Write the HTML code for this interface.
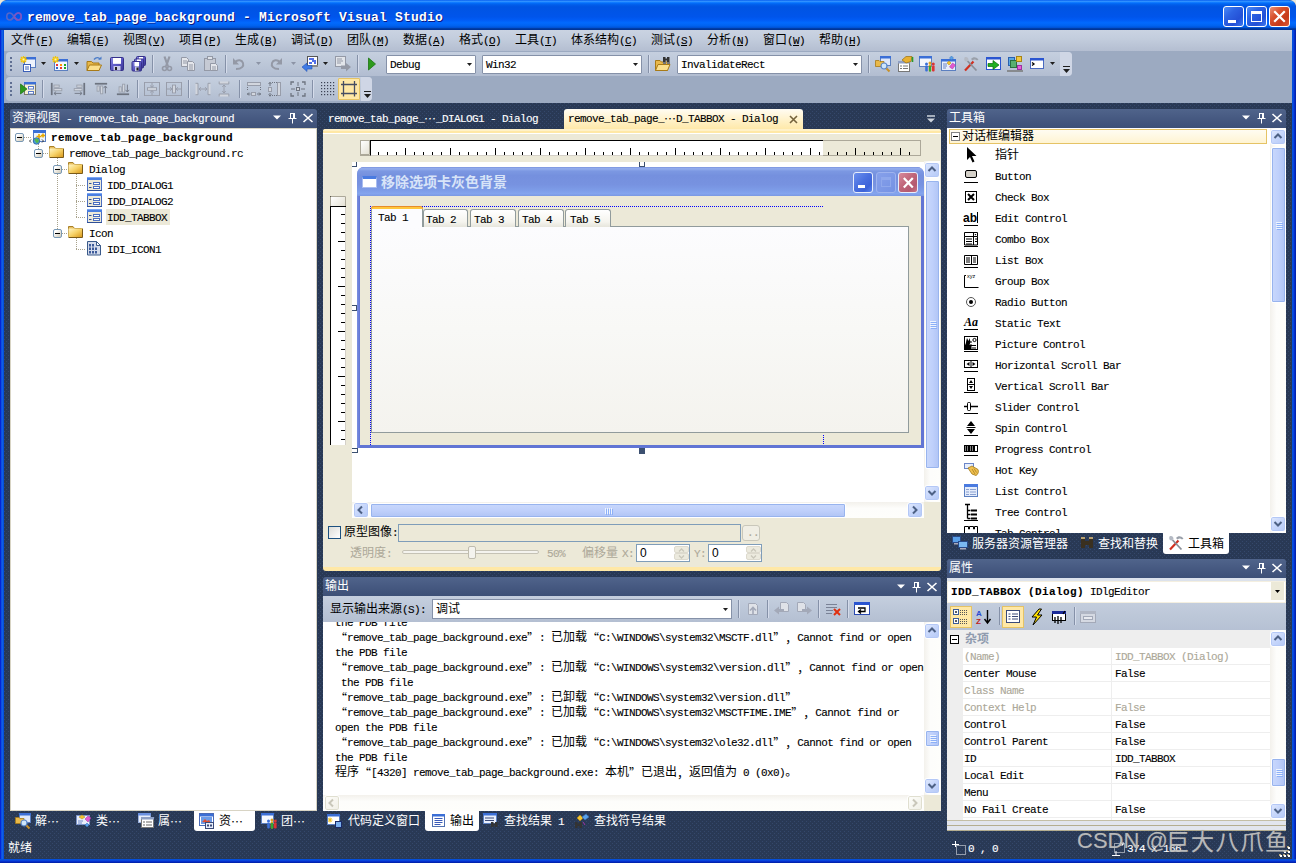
<!DOCTYPE html>
<html lang="zh"><head><meta charset="utf-8"><title>remove_tab_page_background - Microsoft Visual Studio</title>
<style>
html,body{margin:0;padding:0;background:#293955;overflow:hidden}
#root{text-spacing-trim:space-all;position:relative;width:1296px;height:863px;overflow:hidden;background:#293955;font:12px/14px "Liberation Mono","Noto Sans CJK SC",monospace;color:#000}
#root div{position:absolute;box-sizing:border-box}
#root svg{position:absolute;overflow:visible}
.t{white-space:pre;font-size:12px}
.l{font-family:"Liberation Mono",monospace;font-size:11px;letter-spacing:-0.6px;-webkit-text-stroke:0.12px currentColor}
.lb{font-family:"Liberation Mono",monospace;font-size:11px;font-weight:bold;letter-spacing:0.4px;-webkit-text-stroke:0.1px currentColor}
.lt{font-family:"Liberation Mono",monospace;font-size:13px;font-weight:bold;letter-spacing:0.2px}
.w{color:#fff}
.dots{background-color:#293955;background-image:radial-gradient(circle at 0.500px 0.500px,#35486b 0.550px,transparent 0.650px),radial-gradient(circle at 0.500px 0.500px,#35486b 0.550px,transparent 0.650px);background-size:4px 4px;background-position:0 0,2px 2px}
.q{display:inline-block;width:12px;vertical-align:-2px;font-family:"Noto Sans CJK SC","Liberation Mono",sans-serif;font-size:12px;letter-spacing:0;line-height:0;text-spacing-trim:space-all}
.twt{background:linear-gradient(to bottom,#50648b 0,#465981 50%,#3d5077 100%);border-radius:3px 3px 0 0;color:#fff}
.sbtn{background:linear-gradient(to right,#e3ebfd 0,#c8d7fb 50%,#bbcdf8 100%);border:1px solid #fff;border-radius:2px;box-shadow:0 0 0 1px #b4c8f6 inset}
.qe{position:relative;top:0}

</style></head>
<body>
<div id="root">
<!-- frame -->
<div class="dots" style="left:4px;top:103px;width:1288px;height:756px;"></div><div style="left:0px;top:0px;width:4px;height:863px;background:linear-gradient(to right,#0019cf 0,#0831d9 1px,#166aee 2px,#0855dd 3px,#0048d8 4px)"></div><div style="left:1292px;top:0px;width:4px;height:863px;background:linear-gradient(to right,#0048d8 0,#0855dd 1px,#0734da 2px,#001ea0 4px)"></div><div style="left:0px;top:859px;width:1296px;height:4px;background:linear-gradient(to bottom,#0048d8 0,#0855dd 1px,#0734da 2px,#001ea0 4px)"></div><div style="left:0px;top:0px;width:1296px;height:30px;border-radius:7px 7px 0 0;background:linear-gradient(to bottom,#0058ee 0%,#3593ff 4%,#288eff 6%,#127dff 8%,#036ffc 10%,#0262ee 14%,#0057e5 20%,#0054e3 24%,#0055eb 56%,#005bf5 66%,#026afe 76%,#0062ef 86%,#0052d6 92%,#0040ab 94%,#003092 100%)"></div><svg style="left:0;top:0" width="1296" height="8"><path d="M0 0H6Q1 1 0 6Z" fill="#ece9d8"/><path d="M1296 0H1290Q1295 1 1296 6Z" fill="#ece9d8"/></svg><svg style="left:6px;top:12px" width="16" height="9" viewBox="0 0 16 9"><path d="M8 4.500C6.500 2 5 1 3.800 1A3 3.500 0 0 0 3.800 8C5 8 6.500 7 8 4.500C9.500 2 11 1 12.200 1A3 3.500 0 0 1 12.200 8C11 8 9.500 7 8 4.500Z" fill="none" stroke="#5566c8" stroke-width="1.600"/><path d="M8 4.500C9.500 2 11 1 12.200 1A3 3.500 0 0 1 12.200 8C11 8 9.500 7 8 4.500" fill="none" stroke="#7d54c4" stroke-width="1.600"/></svg><div class="t" style="left:27px;top:10px;line-height:16px;color:#fff;text-shadow:1px 1px 0 #0a1883"><span class="lt">remove_tab_page_background - Microsoft Visual Studio</span></div><div style="left:1223px;top:6px;width:21px;height:21px;border:1px solid #fff;border-radius:3px;background:radial-gradient(circle at 70% 75%,#2f6ff2 0,#2a5fe0 45%,#4a84f5 100%);background:linear-gradient(135deg,#4b8bf7 0%,#2d63e3 35%,#2450d6 70%,#3a78f0 100%)"><div style="left:4px;top:13px;width:8px;height:3px;background:#fff"></div></div><div style="left:1246px;top:6px;width:21px;height:21px;border:1px solid #fff;border-radius:3px;background:linear-gradient(135deg,#4b8bf7 0%,#2d63e3 35%,#2450d6 70%,#3a78f0 100%)"><div style="left:4px;top:4px;width:11px;height:11px;border:1px solid #fff;border-top:3px solid #fff"></div></div><div style="left:1269px;top:6px;width:21px;height:21px;border:1px solid #fff;border-radius:3px;background:linear-gradient(135deg,#eb9076 0%,#d8512d 35%,#c6391a 70%,#dd5a36 100%)"><svg style="left:3px;top:3px" width="13" height="13" viewBox="0 0 13 13"><path d="M2 2L11 11M11 2L2 11" stroke="#fff" stroke-width="2.2" stroke-linecap="square"/></svg></div>
<!-- menubar -->
<div style="left:4px;top:30px;width:1288px;height:21px;background:linear-gradient(to bottom,#cad3e2 0,#c3cddd 40%,#b4bed1 100%)"></div><div class="t" style="left:11px;top:34px;line-height:14px">文件<span class="l">(<u>F</u>)</span></div><div class="t" style="left:67px;top:34px;line-height:14px">编辑<span class="l">(<u>E</u>)</span></div><div class="t" style="left:123px;top:34px;line-height:14px">视图<span class="l">(<u>V</u>)</span></div><div class="t" style="left:179px;top:34px;line-height:14px">项目<span class="l">(<u>P</u>)</span></div><div class="t" style="left:235px;top:34px;line-height:14px">生成<span class="l">(<u>B</u>)</span></div><div class="t" style="left:291px;top:34px;line-height:14px">调试<span class="l">(<u>D</u>)</span></div><div class="t" style="left:347px;top:34px;line-height:14px">团队<span class="l">(<u>M</u>)</span></div><div class="t" style="left:403px;top:34px;line-height:14px">数据<span class="l">(<u>A</u>)</span></div><div class="t" style="left:459px;top:34px;line-height:14px">格式<span class="l">(<u>O</u>)</span></div><div class="t" style="left:515px;top:34px;line-height:14px">工具<span class="l">(<u>T</u>)</span></div><div class="t" style="left:571px;top:34px;line-height:14px">体系结构<span class="l">(<u>C</u>)</span></div><div class="t" style="left:651px;top:34px;line-height:14px">测试<span class="l">(<u>S</u>)</span></div><div class="t" style="left:707px;top:34px;line-height:14px">分析<span class="l">(<u>N</u>)</span></div><div class="t" style="left:763px;top:34px;line-height:14px">窗口<span class="l">(<u>W</u>)</span></div><div class="t" style="left:819px;top:34px;line-height:14px">帮助<span class="l">(<u>H</u>)</span></div>
<!-- toolbars -->
<div style="left:4px;top:51px;width:1288px;height:52px;background:#9caac1"></div><div style="left:6px;top:52px;width:1066px;height:24px;background:linear-gradient(to bottom,#c5cfdf 0,#bcc7d8 50%,#b2bdd1 100%);border-radius:4px;"></div><div style="left:1060px;top:52px;width:12px;height:24px;background:#cfd6e5;border-radius:0 4px 4px 0"></div><div style="left:6px;top:77px;width:366px;height:24px;background:linear-gradient(to bottom,#c5cfdf 0,#bcc7d8 50%,#b2bdd1 100%);border-radius:4px;"></div><div style="left:361px;top:77px;width:11px;height:24px;background:#cfd6e5;border-radius:0 4px 4px 0"></div><div style="left:10px;top:57px;width:2px;height:2px;background:#5f6f92"></div><div style="left:10px;top:61px;width:2px;height:2px;background:#5f6f92"></div><div style="left:10px;top:65px;width:2px;height:2px;background:#5f6f92"></div><div style="left:10px;top:69px;width:2px;height:2px;background:#5f6f92"></div><div style="left:10px;top:82px;width:2px;height:2px;background:#5f6f92"></div><div style="left:10px;top:86px;width:2px;height:2px;background:#5f6f92"></div><div style="left:10px;top:90px;width:2px;height:2px;background:#5f6f92"></div><div style="left:10px;top:94px;width:2px;height:2px;background:#5f6f92"></div><svg style="left:20px;top:56px" width="16" height="16" viewBox="0 0 16 16" preserveAspectRatio="none"><rect x="4.5" y="1.5" width="11" height="10" fill="#eef3fc" stroke="#5b7fc0" stroke-width="1"/><rect x="4" y="1" width="12" height="2.500" fill="#3b6fd6"/><rect x="3.500" y="8.500" width="7" height="7" fill="#fff" stroke="#3a5fb8"/><path d="M5 11h4M5 13h4" stroke="#3a5fb8"/><path d="M3.500 0v7M0 3.500h7M1 1l5 5M6 1l-5 5" stroke="#f5c400" stroke-width="1.300"/><rect x="2.500" y="2.500" width="2" height="2" fill="#fff6b0"/></svg><svg style="left:41px;top:62px" width="5" height="3" viewBox="0 0 5 3"><path d="M0 0h5l-2.500 3z" fill="#1e1e1e"/></svg><svg style="left:52px;top:56px" width="16" height="16" viewBox="0 0 16 16" preserveAspectRatio="none"><rect x="2.5" y="3.5" width="13" height="11" fill="#f4f7fd" stroke="#5b7fc0" stroke-width="1"/><rect x="2" y="3" width="14" height="2.500" fill="#3b6fd6"/><rect x="4" y="8" width="2" height="2" fill="#e33"/><rect x="8" y="8" width="2" height="2" fill="#f90"/><rect x="12" y="8" width="2" height="2" fill="#2a2"/><rect x="4" y="11" width="2" height="2" fill="#36c"/><rect x="8" y="11" width="2" height="2" fill="#e33"/><rect x="12" y="11" width="2" height="2" fill="#2a2"/><path d="M3.500 0v7M0 3.500h7M1 1l5 5M6 1l-5 5" stroke="#f5c400" stroke-width="1.300"/><rect x="2.500" y="2.500" width="2" height="2" fill="#fff6b0"/></svg><svg style="left:74px;top:62px" width="5" height="3" viewBox="0 0 5 3"><path d="M0 0h5l-2.500 3z" fill="#1e1e1e"/></svg><svg style="left:86px;top:56px" width="16" height="16" viewBox="0 0 16 16" preserveAspectRatio="none"><path d="M1 5.500h4.500l1.500 1.500h6v7.500h-12z" fill="#e8b84a" stroke="#a87a17"/><path d="M3.500 9h12l-2.500 5.500h-12z" fill="#fbdf8b" stroke="#a87a17"/><path d="M8 3.500c2-2.500 5-2.500 6 0" fill="none" stroke="#4a7bc8" stroke-width="1.400"/><path d="M12 3.500h3.500v-3z" fill="#4a7bc8"/></svg><svg style="left:109px;top:56px" width="16" height="16" viewBox="0 0 16 16" preserveAspectRatio="none"><defs><linearGradient id="flg" x1="0" y1="0" x2="1" y2="1"><stop offset="0" stop-color="#8a88e0"/><stop offset=".5" stop-color="#5a56c4"/><stop offset="1" stop-color="#3a3690"/></linearGradient></defs><rect x="1.5" y="1.5" width="13" height="13" rx="1" fill="url(#flg)" stroke="#34308a"/><rect x="4" y="2" width="8" height="5.85" fill="#fff"/><rect x="4.5" y="10" width="7" height="4.5" fill="#c9cbe8"/><rect x="6" y="11" width="2" height="3" fill="#222"/></svg><svg style="left:131px;top:56px" width="16" height="16" viewBox="0 0 16 16" preserveAspectRatio="none"><defs><linearGradient id="flg" x1="0" y1="0" x2="1" y2="1"><stop offset="0" stop-color="#8a88e0"/><stop offset=".5" stop-color="#5a56c4"/><stop offset="1" stop-color="#3a3690"/></linearGradient></defs><rect x="5.5" y="0.5" width="9" height="9" rx="1" fill="url(#flg)" stroke="#34308a"/><rect x="8" y="1" width="4" height="4.05" fill="#fff"/><rect x="8.5" y="5" width="3" height="4.5" fill="#c9cbe8"/><rect x="10" y="6" width="2" height="3" fill="#222"/><defs><linearGradient id="flg" x1="0" y1="0" x2="1" y2="1"><stop offset="0" stop-color="#8a88e0"/><stop offset=".5" stop-color="#5a56c4"/><stop offset="1" stop-color="#3a3690"/></linearGradient></defs><rect x="3.5" y="3" width="9" height="9" rx="1" fill="url(#flg)" stroke="#34308a"/><rect x="6" y="3.5" width="4" height="4.05" fill="#fff"/><rect x="6.5" y="7.5" width="3" height="4.5" fill="#c9cbe8"/><rect x="8" y="8.5" width="2" height="3" fill="#222"/><defs><linearGradient id="flg" x1="0" y1="0" x2="1" y2="1"><stop offset="0" stop-color="#8a88e0"/><stop offset=".5" stop-color="#5a56c4"/><stop offset="1" stop-color="#3a3690"/></linearGradient></defs><rect x="1" y="5.5" width="9.5" height="9.5" rx="1" fill="url(#flg)" stroke="#34308a"/><rect x="3.5" y="6" width="4.5" height="4.275" fill="#fff"/><rect x="4" y="10.5" width="3.5" height="4.5" fill="#c9cbe8"/><rect x="5.5" y="11.5" width="2" height="3" fill="#222"/></svg><div style="left:152px;top:55px;width:1px;height:18px;background:#8591a8"></div><div style="left:153px;top:55px;width:1px;height:18px;background:#d5dceb"></div><svg style="left:159px;top:56px" width="16" height="16" viewBox="0 0 16 16" preserveAspectRatio="none"><path d="M5.500 0.500l3.500 10M10.500 0.500l-3.500 10" stroke="#9499a6" stroke-width="2.200" fill="none"/><circle cx="5.500" cy="12.500" r="2" fill="none" stroke="#9499a6" stroke-width="1.600"/><circle cx="10.500" cy="12.500" r="2" fill="none" stroke="#9499a6" stroke-width="1.600"/></svg><svg style="left:180px;top:56px" width="16" height="16" viewBox="0 0 16 16" preserveAspectRatio="none"><path d="M1.500 1.500h5l2 2v7h-7z" fill="#e4e6eb" stroke="#9499a6"/><path d="M3 5h4M3 7h4" stroke="#9499a6"/><path d="M7.500 5.500h5l2 2v7h-7z" fill="#e4e6eb" stroke="#9499a6"/><path d="M9 9h4M9 11h4M9 13h4" stroke="#9499a6"/></svg><svg style="left:203px;top:56px" width="16" height="16" viewBox="0 0 16 16" preserveAspectRatio="none"><rect x="1.500" y="2.500" width="11" height="12" fill="#c6cad4" stroke="#9499a6"/><rect x="4.500" y="0.500" width="5" height="3" fill="#dfe2e8" stroke="#9499a6"/><path d="M7.500 7.500h5l2 2v5h-7z" fill="#e4e6eb" stroke="#9499a6"/><path d="M9 11h4M9 13h4" stroke="#9499a6"/></svg><div style="left:225px;top:55px;width:1px;height:18px;background:#8591a8"></div><div style="left:226px;top:55px;width:1px;height:18px;background:#d5dceb"></div><svg style="left:232px;top:56px" width="16" height="16" viewBox="0 0 16 16" preserveAspectRatio="none"><path d="M4 13c6 0 8-3 7-6s-5-4-8-1" fill="none" stroke="#9499a6" stroke-width="2"/><path d="M1 2v6.500h6z" fill="#9499a6"/></svg><svg style="left:256px;top:62px" width="5" height="3" viewBox="0 0 5 3"><path d="M0 0h5l-2.500 3z" fill="#8c94a6"/></svg><svg style="left:267px;top:56px" width="16" height="16" viewBox="0 0 16 16" preserveAspectRatio="none"><path d="M12 13c-6 0-8-3-7-6s5-4 8-1" fill="none" stroke="#9499a6" stroke-width="2"/><path d="M15 2v6.500h-6z" fill="#9499a6"/></svg><svg style="left:291px;top:62px" width="5" height="3" viewBox="0 0 5 3"><path d="M0 0h5l-2.500 3z" fill="#8c94a6"/></svg><svg style="left:302px;top:56px" width="16" height="16" viewBox="0 0 16 16" preserveAspectRatio="none"><rect x="5.500" y="0.500" width="10" height="10" fill="#fff" stroke="#555"/><rect x="5" y="9" width="11" height="2" fill="#8a8a8a"/><path d="M7 3h5M10 5h4M7 7h3M12 7h2" stroke="#1a3fe0" stroke-width="1.300"/><path d="M0 11l5-4v2.500h5v3.500h-5v2.500z" fill="#3f7be6" stroke="#2456b8" stroke-width=".6"/></svg><svg style="left:323px;top:62px" width="5" height="3" viewBox="0 0 5 3"><path d="M0 0h5l-2.500 3z" fill="#1e1e1e"/></svg><svg style="left:335px;top:56px" width="16" height="16" viewBox="0 0 16 16" preserveAspectRatio="none"><rect x="0.500" y="0.500" width="10" height="10" fill="#e2e5ea" stroke="#9499a6"/><path d="M2 3h5M2 5h6M2 7h4" stroke="#9499a6"/><path d="M16 11l-5-4v2.500h-5v3.500h5v2.500z" fill="#9499a6"/></svg><div style="left:357px;top:55px;width:1px;height:18px;background:#8591a8"></div><div style="left:358px;top:55px;width:1px;height:18px;background:#d5dceb"></div><svg style="left:364px;top:56px" width="16" height="16" viewBox="0 0 16 16" preserveAspectRatio="none"><path d="M4.500 2l7 6-7 6z" fill="#2c9a1c" stroke="#1c7410" stroke-width=".8"/></svg><div style="left:386px;top:55px;width:90px;height:19px;background:#fff;border:1px solid #8591a8;border-radius:1px"><div class="t" style="left:3px;top:2px;line-height:14px"><span class="l">Debug</span></div><svg style="left:80px;top:7px" width="5" height="3" viewBox="0 0 5 3"><path d="M0 0h5l-2.500 3z" fill="#1e1e1e"/></svg></div><div style="left:482px;top:55px;width:160px;height:19px;background:#fff;border:1px solid #8591a8;border-radius:1px"><div class="t" style="left:3px;top:2px;line-height:14px"><span class="l">Win32</span></div><svg style="left:150px;top:7px" width="5" height="3" viewBox="0 0 5 3"><path d="M0 0h5l-2.500 3z" fill="#1e1e1e"/></svg></div><div style="left:648px;top:55px;width:1px;height:18px;background:#8591a8"></div><div style="left:649px;top:55px;width:1px;height:18px;background:#d5dceb"></div><svg style="left:655px;top:56px" width="16" height="16" viewBox="0 0 16 16" preserveAspectRatio="none"><path d="M0.500 4.500h4.500l1.500 1.500h6v8.500h-12z" fill="#e8b84a" stroke="#a87a17"/><path d="M3 8.500h12l-2.500 6h-12z" fill="#fbdf8b" stroke="#a87a17"/><path d="M8 1h2.500v6h-2.500zM12 1h2.500v6h-2.500zM10 2.500h2.500v2h-2.500z" fill="#333"/><path d="M8 7h3M12 7h3" stroke="#777" stroke-width="2"/></svg><div style="left:677px;top:55px;width:185px;height:19px;background:#fff;border:1px solid #8591a8;border-radius:1px"><div class="t" style="left:3px;top:2px;line-height:14px"><span class="l">InvalidateRect</span></div><svg style="left:175px;top:7px" width="5" height="3" viewBox="0 0 5 3"><path d="M0 0h5l-2.500 3z" fill="#1e1e1e"/></svg></div><div style="left:868px;top:55px;width:1px;height:18px;background:#8591a8"></div><div style="left:869px;top:55px;width:1px;height:18px;background:#d5dceb"></div><svg style="left:875px;top:56px" width="16" height="16" viewBox="0 0 16 16" preserveAspectRatio="none"><rect x="5.5" y="0.5" width="10" height="9" fill="#dfe8fa" stroke="#5b7fc0" stroke-width="1"/><rect x="5" y="0" width="11" height="2.500" fill="#3b6fd6"/><path d="M0.500 4.500h3.500l1 1h4v5h-8.500z" fill="#e9b949" stroke="#a87a17" stroke-width=".8"/><circle cx="9" cy="10" r="3" fill="#cfe6fb" stroke="#5a86c8" stroke-width="1.200"/><path d="M11.500 12.500l3 3" stroke="#c89028" stroke-width="2"/></svg><svg style="left:897px;top:56px" width="16" height="16" viewBox="0 0 16 16" preserveAspectRatio="none"><rect x="1.500" y="5.500" width="11" height="10" fill="#fff" stroke="#777"/><rect x="1" y="5" width="12" height="2.500" fill="#8e9fc4"/><path d="M3 10h2M6 10h5M3 12.500h2M6 12.500h5" stroke="#777"/><path d="M5 4l4-3.500h6l-1 5-5 1.500z" fill="#e8b030" stroke="#9a7010" stroke-width=".7"/><path d="M15.500 1v5" stroke="#2a9a2a" stroke-width="1.600"/></svg><svg style="left:919px;top:56px" width="16" height="16" viewBox="0 0 16 16" preserveAspectRatio="none"><rect x="0.5" y="0.5" width="12" height="10" fill="#f4f7fd" stroke="#5b7fc0" stroke-width="1"/><rect x="0" y="0" width="13" height="2.500" fill="#3b6fd6"/><circle cx="7.500" cy="8" r="1.500" fill="#3a6fd8"/><rect x="6.200" y="9.500" width="2.600" height="6" rx="1" fill="#3a6fd8"/><circle cx="11" cy="7" r="1.500" fill="#e0a020"/><rect x="9.700" y="8.500" width="2.600" height="7" rx="1" fill="#e0a020"/><circle cx="14.300" cy="8" r="1.500" fill="#d33"/><rect x="13" y="9.500" width="2.600" height="6" rx="1" fill="#d33"/><rect x="10" y="10" width="2" height="5.500" fill="#3a3"/></svg><svg style="left:941px;top:56px" width="16" height="16" viewBox="0 0 16 16" preserveAspectRatio="none"><rect x="0.5" y="3.5" width="14" height="11" fill="#e8eefb" stroke="#5b7fc0" stroke-width="1"/><rect x="0" y="3" width="15" height="2.500" fill="#3b6fd6"/><path d="M2 8h4M2 10h4M2 12h3" stroke="#6a86c8"/><path d="M6 7l2-2 2 2-2 2z" fill="#f2c230" stroke="#b08a10" stroke-width=".5"/><path d="M8.500 11l3-4 3 2-3 4z" fill="#e25ad0" stroke="#a030a0" stroke-width=".5"/><path d="M8.500 2l2-2 2 2-2 2z" fill="#5aa0e8" stroke="#3070b8" stroke-width=".5"/></svg><svg style="left:963px;top:56px" width="16" height="16" viewBox="0 0 16 16" preserveAspectRatio="none"><path d="M2 14.500l8.500-9" stroke="#d03020" stroke-width="2.200"/><path d="M13.500 14.500l-9-9.500" stroke="#8a8f98" stroke-width="1.800"/><path d="M8 3c2-2.500 5-2.500 7.500 0.500l-1.500 1c-1.500-1.500-3-1.500-4.500 0z" fill="#9aa0aa"/><path d="M1.500 1.500c2-1 4 0 4 2.500l-1.500 1.500c-2 0.500-3.500-1.500-2.500-4z" fill="#b5bac4"/></svg><svg style="left:986px;top:56px" width="16" height="16" viewBox="0 0 16 16" preserveAspectRatio="none"><rect x="0.5" y="1.5" width="14" height="12" fill="#fff" stroke="#2a55d0" stroke-width="1"/><rect x="0" y="1" width="15" height="2.500" fill="#2a55d0"/><path d="M2 7.500h5v-3l6 4.500-6 4.500v-3h-5z" fill="#22b020" stroke="#0c6a0c" stroke-width=".7"/></svg><svg style="left:1007px;top:56px" width="16" height="16" viewBox="0 0 16 16" preserveAspectRatio="none"><rect x="1.500" y="1.500" width="6" height="8" fill="#5aa8e0" stroke="#2a60b0"/><rect x="3.500" y="4.500" width="6" height="7" fill="#58b070" stroke="#2a7040"/><rect x="9.500" y="0.500" width="5" height="5" fill="#f2c840" stroke="#a88410"/><rect x="10.500" y="9.500" width="4" height="4" fill="#e860d8" stroke="#a030a0"/><path d="M0 15h16" stroke="#777" stroke-width="1.500"/></svg><svg style="left:1029px;top:56px" width="16" height="16" viewBox="0 0 16 16" preserveAspectRatio="none"><rect x="1.5" y="2.5" width="13" height="10" fill="#fff" stroke="#4a6ac0" stroke-width="1"/><rect x="1" y="2" width="14" height="2.500" fill="#2a55d0"/><path d="M3 6.500l2 1.500-2 1.500" fill="none" stroke="#000" stroke-width="1.300"/></svg><svg style="left:1050px;top:62px" width="5" height="3" viewBox="0 0 5 3"><path d="M0 0h5l-2.500 3z" fill="#1e1e1e"/></svg><svg style="left:1063px;top:66px" width="7" height="7" viewBox="0 0 7 7"><path d="M0 0.500h7" stroke="#1e1e1e"/><path d="M0 3h7l-3.500 4z" fill="#1e1e1e"/></svg><svg style="left:20px;top:81px" width="16" height="16" viewBox="0 0 16 16" preserveAspectRatio="none"><rect x="4.5" y="1.5" width="11" height="12" fill="#f6efd2" stroke="#7a7a6a" stroke-width="1"/><rect x="4" y="1" width="12" height="2.500" fill="#3b6fd6"/><rect x="8.500" y="5.500" width="5" height="2.500" fill="#fff" stroke="#5a7ac8"/><rect x="8.500" y="10.500" width="5" height="2.500" fill="#fff" stroke="#5a7ac8"/><path d="M0.500 3l6.500 5-6.500 5z" fill="#2c9a1c" stroke="#1c7410" stroke-width=".7"/></svg><div style="left:42px;top:80px;width:1px;height:18px;background:#8591a8"></div><div style="left:43px;top:80px;width:1px;height:18px;background:#d5dceb"></div><svg style="left:50px;top:82px" width="14" height="14" viewBox="0 0 16 16" preserveAspectRatio="none"><path d="M2 1v14" stroke="#6e7480" stroke-width="2"/><rect x="4.500" y="3.500" width="6" height="2.500" fill="#d2d6de" stroke="#9aa0ac"/><rect x="4.500" y="7.500" width="9" height="2.500" fill="#d2d6de" stroke="#9aa0ac"/><path d="M13 13h-8M7 11l-2.500 2 2.500 2" fill="none" stroke="#6e7480"/></svg><svg style="left:72px;top:82px" width="14" height="14" viewBox="0 0 16 16" preserveAspectRatio="none"><path d="M14 1v14" stroke="#6e7480" stroke-width="2"/><rect x="5.500" y="3.500" width="6" height="2.500" fill="#d2d6de" stroke="#9aa0ac"/><rect x="2.500" y="7.500" width="9" height="2.500" fill="#d2d6de" stroke="#9aa0ac"/><path d="M3 13h8M9 11l2.500 2-2.500 2" fill="none" stroke="#6e7480"/></svg><svg style="left:94px;top:82px" width="14" height="14" viewBox="0 0 16 16" preserveAspectRatio="none"><path d="M1 2h14" stroke="#6e7480" stroke-width="2"/><rect x="3.500" y="4.500" width="2.500" height="6" fill="#d2d6de" stroke="#9aa0ac"/><rect x="7.500" y="4.500" width="2.500" height="9" fill="#d2d6de" stroke="#9aa0ac"/><path d="M13 13v-8M11 7l2-2.500 2 2.500" fill="none" stroke="#6e7480"/></svg><svg style="left:116px;top:82px" width="14" height="14" viewBox="0 0 16 16" preserveAspectRatio="none"><path d="M1 14h14" stroke="#6e7480" stroke-width="2"/><rect x="3.500" y="5.500" width="2.500" height="6" fill="#d2d6de" stroke="#9aa0ac"/><rect x="7.500" y="2.500" width="2.500" height="9" fill="#d2d6de" stroke="#9aa0ac"/><path d="M13 3v8M11 9l2 2.500 2-2.500" fill="none" stroke="#6e7480"/></svg><div style="left:137px;top:80px;width:1px;height:18px;background:#8591a8"></div><div style="left:138px;top:80px;width:1px;height:18px;background:#d5dceb"></div><svg style="left:144px;top:82px" width="16" height="14" viewBox="0 0 16 16" preserveAspectRatio="none"><rect x="0.500" y="0.500" width="15" height="15" fill="none" stroke="#989daa"/><rect x="3.500" y="6.500" width="9" height="3" fill="#d2d6de" stroke="#989daa"/><path d="M8 1v5M8 10v5M6 4l2 2 2-2M6 12l2-2 2 2" fill="none" stroke="#989daa"/></svg><svg style="left:166px;top:82px" width="16" height="14" viewBox="0 0 16 16" preserveAspectRatio="none"><rect x="0.500" y="0.500" width="15" height="15" fill="none" stroke="#989daa"/><rect x="6.500" y="3.500" width="3" height="9" fill="#d2d6de" stroke="#989daa"/><path d="M1 8h5M10 8h5M4 6l2 2-2 2M12 6l-2 2 2 2" fill="none" stroke="#989daa"/></svg><div style="left:188px;top:80px;width:1px;height:18px;background:#8591a8"></div><div style="left:189px;top:80px;width:1px;height:18px;background:#d5dceb"></div><svg style="left:195px;top:82px" width="16" height="14" viewBox="0 0 16 16" preserveAspectRatio="none"><path d="M0.500 1.500h2.500v13h-2.500M15.500 1.500h-2.500v13h2.500" fill="#d2d6de" stroke="#989daa"/><path d="M4 8h8M6 6l-2 2 2 2M10 6l2 2-2 2" fill="none" stroke="#989daa"/></svg><svg style="left:217px;top:81px" width="14" height="16" viewBox="0 0 16 16" preserveAspectRatio="none"><path d="M2.500 0.500v2.500h11v-2.500M2.500 15.500v-2.500h11v2.500" fill="#d2d6de" stroke="#989daa"/><path d="M8 4v8M6 6l2-2 2 2M6 10l2 2 2-2" fill="none" stroke="#989daa"/></svg><div style="left:239px;top:80px;width:1px;height:18px;background:#8591a8"></div><div style="left:240px;top:80px;width:1px;height:18px;background:#d5dceb"></div><svg style="left:246px;top:81px" width="16" height="16" viewBox="0 0 16 16" preserveAspectRatio="none"><rect x="1.500" y="1.500" width="13" height="3" fill="#d2d6de" stroke="#989daa"/><rect x="5.500" y="11.500" width="4" height="3" fill="#d2d6de" stroke="#989daa"/><path d="M1.500 6v4M14.500 6v4" stroke="#6e7480" stroke-dasharray="1 1"/><path d="M1 13h3.500M11 13h4M3 11.500l-1.500 1.500 1.500 1.500M13 11.500l1.500 1.500-1.500 1.500" fill="none" stroke="#6e7480"/></svg><svg style="left:267px;top:81px" width="16" height="16" viewBox="0 0 16 16" preserveAspectRatio="none"><rect x="10.500" y="1.500" width="3" height="13" fill="#d2d6de" stroke="#989daa"/><rect x="1.500" y="6.500" width="3" height="4" fill="#d2d6de" stroke="#989daa"/><path d="M5 1.500h5M5 14.500h5" stroke="#6e7480" stroke-dasharray="1 1"/><path d="M3 1v4M3 12v3.500M1.500 3l1.500-1.500 1.500 1.500M1.500 13.500l1.500 1.500 1.500-1.500" fill="none" stroke="#6e7480"/></svg><svg style="left:290px;top:81px" width="16" height="16" viewBox="0 0 16 16" preserveAspectRatio="none"><path d="M1 4v-3h3M12 1h3v3M15 12v3h-3M4 15h-3v-3" fill="none" stroke="#6e7480" stroke-width="1.300"/><rect x="6.500" y="6.500" width="3" height="3" fill="#d2d6de" stroke="#6e7480"/><path d="M8 1v4M8 11v4M1 8h4M11 8h4" stroke="#6e7480"/></svg><div style="left:312px;top:80px;width:1px;height:18px;background:#8591a8"></div><div style="left:313px;top:80px;width:1px;height:18px;background:#d5dceb"></div><svg style="left:321px;top:82px" width="14" height="14" viewBox="0 0 14 14" preserveAspectRatio="none"><rect x="0" y="0" width="1.200" height="1.200" fill="#3c4254"/><rect x="0" y="3" width="1.200" height="1.200" fill="#3c4254"/><rect x="0" y="6" width="1.200" height="1.200" fill="#3c4254"/><rect x="0" y="9" width="1.200" height="1.200" fill="#3c4254"/><rect x="0" y="12" width="1.200" height="1.200" fill="#3c4254"/><rect x="3" y="0" width="1.200" height="1.200" fill="#3c4254"/><rect x="3" y="3" width="1.200" height="1.200" fill="#3c4254"/><rect x="3" y="6" width="1.200" height="1.200" fill="#3c4254"/><rect x="3" y="9" width="1.200" height="1.200" fill="#3c4254"/><rect x="3" y="12" width="1.200" height="1.200" fill="#3c4254"/><rect x="6" y="0" width="1.200" height="1.200" fill="#3c4254"/><rect x="6" y="3" width="1.200" height="1.200" fill="#3c4254"/><rect x="6" y="6" width="1.200" height="1.200" fill="#3c4254"/><rect x="6" y="9" width="1.200" height="1.200" fill="#3c4254"/><rect x="6" y="12" width="1.200" height="1.200" fill="#3c4254"/><rect x="9" y="0" width="1.200" height="1.200" fill="#3c4254"/><rect x="9" y="3" width="1.200" height="1.200" fill="#3c4254"/><rect x="9" y="6" width="1.200" height="1.200" fill="#3c4254"/><rect x="9" y="9" width="1.200" height="1.200" fill="#3c4254"/><rect x="9" y="12" width="1.200" height="1.200" fill="#3c4254"/><rect x="12" y="0" width="1.200" height="1.200" fill="#3c4254"/><rect x="12" y="3" width="1.200" height="1.200" fill="#3c4254"/><rect x="12" y="6" width="1.200" height="1.200" fill="#3c4254"/><rect x="12" y="9" width="1.200" height="1.200" fill="#3c4254"/><rect x="12" y="12" width="1.200" height="1.200" fill="#3c4254"/></svg><div style="left:338px;top:78px;width:22px;height:22px;background:#ffe8a6;border:1px solid #e5c365;border-radius:1px"></div><svg style="left:341px;top:81px" width="16" height="16" viewBox="0 0 16 16" preserveAspectRatio="none"><path d="M2.500 0v15.500M13.500 0v15.500M0 3.500h16M0 12.500h16" stroke="#454d63" stroke-width="1.300"/></svg><svg style="left:364px;top:91px" width="7" height="7" viewBox="0 0 7 7"><path d="M0 0.500h7" stroke="#1e1e1e"/><path d="M0 3h7l-3.500 4z" fill="#1e1e1e"/></svg>
<!-- leftpanel -->
<div class="twt" style="left:10px;top:109px;width:307px;height:19px;"></div><div class="t" style="left:12px;top:112px;line-height:14px;height:14px;color:#fff">资源视图<span class="l"> - remove_tab_page_background</span></div><svg style="left:273px;top:112px" width="41" height="12" viewBox="0 0 41 12"><path d="M0 3.500h8l-4 4z" fill="#fff"/><path d="M17.500 1v5.500M21.500 1v5.500M17.500 1.500h4M15.500 6.500h8M19.500 7v4.500" stroke="#fff" fill="none"/><path d="M20.500 1v5" stroke="#fff"/><path d="M30.500 2l9 8M39.500 2l-9 8" stroke="#fff" stroke-width="1.600"/></svg><div style="left:10px;top:128px;width:307px;height:683px;background:#fff;border:1px solid #d8d4c4"></div><div style="left:24px;top:137px;width:7px;height:1px;background-image:linear-gradient(to right,#a8a28c 1px,transparent 1px);background-size:2px 1px;"></div><div style="left:38px;top:142px;width:1px;height:7px;background-image:linear-gradient(to bottom,#a8a28c 1px,transparent 1px);background-size:1px 2px;"></div><div style="left:43px;top:153px;width:5px;height:1px;background-image:linear-gradient(to right,#a8a28c 1px,transparent 1px);background-size:2px 1px;"></div><div style="left:57px;top:158px;width:1px;height:75px;background-image:linear-gradient(to bottom,#a8a28c 1px,transparent 1px);background-size:1px 2px;"></div><div style="left:62px;top:169px;width:5px;height:1px;background-image:linear-gradient(to right,#a8a28c 1px,transparent 1px);background-size:2px 1px;"></div><div style="left:62px;top:233px;width:5px;height:1px;background-image:linear-gradient(to right,#a8a28c 1px,transparent 1px);background-size:2px 1px;"></div><div style="left:76px;top:174px;width:1px;height:43px;background-image:linear-gradient(to bottom,#a8a28c 1px,transparent 1px);background-size:1px 2px;"></div><div style="left:76px;top:185px;width:10px;height:1px;background-image:linear-gradient(to right,#a8a28c 1px,transparent 1px);background-size:2px 1px;"></div><div style="left:76px;top:201px;width:10px;height:1px;background-image:linear-gradient(to right,#a8a28c 1px,transparent 1px);background-size:2px 1px;"></div><div style="left:76px;top:217px;width:10px;height:1px;background-image:linear-gradient(to right,#a8a28c 1px,transparent 1px);background-size:2px 1px;"></div><div style="left:76px;top:238px;width:1px;height:11px;background-image:linear-gradient(to bottom,#a8a28c 1px,transparent 1px);background-size:1px 2px;"></div><div style="left:76px;top:249px;width:10px;height:1px;background-image:linear-gradient(to right,#a8a28c 1px,transparent 1px);background-size:2px 1px;"></div><div style="left:15px;top:133px;width:9px;height:9px;border:1px solid #7898b5;border-radius:2px;background:linear-gradient(135deg,#fff 20%,#cfc9b6)"><div style="left:1px;top:3px;width:5px;height:1px;background:#000"></div></div><svg style="left:31px;top:129px" width="16" height="16" viewBox="0 0 16 16" ><rect x="2.500" y="1.500" width="12" height="11" fill="#eef3fc" stroke="#5b7fc0"/><rect x="2" y="1" width="13" height="3" fill="#3b6fd6"/><path d="M8 5v5M5.500 7.500h5M12 4.500v4M10 6.500h4" stroke="#e8a800" stroke-width="1.600"/><circle cx="5.500" cy="12" r="3.300" fill="#4a9ad8" stroke="#2a5a98" stroke-width=".7"/><path d="M3.500 11c1-2 3-2 4 0s-1 3-2 3z" fill="#58b848"/><path d="M0 10.500l-1.500 1.500 1.500 1.500M11 10.500l1.500 1.500-1.500 1.500" fill="none" stroke="#222" stroke-width=".9"/></svg><div class="t" style="left:51px;top:131px;line-height:14px;height:14px;"><span class="lb">remove_tab_page_background</span></div><div style="left:34px;top:149px;width:9px;height:9px;border:1px solid #7898b5;border-radius:2px;background:linear-gradient(135deg,#fff 20%,#cfc9b6)"><div style="left:1px;top:3px;width:5px;height:1px;background:#000"></div></div><svg style="left:48px;top:144px" width="16" height="16" viewBox="0 0 16 16" ><defs><linearGradient id="fg" x1="0" y1="0" x2="1" y2="1"><stop offset="0" stop-color="#fff6c8"/><stop offset=".5" stop-color="#f7d36a"/><stop offset="1" stop-color="#d99a1c"/></linearGradient></defs><path d="M1.500 2.500h4.500l1.500 2h7v8h-13z" fill="#e8c060" stroke="#a88028"/><path d="M1.500 4.500h13.500v8.500h-13.500z" fill="url(#fg)"/><path d="M1.500 13.500h14v-9" fill="none" stroke="#7a5a18"/></svg><div class="t" style="left:69px;top:147px;line-height:14px;height:14px;"><span class="l">remove_tab_page_background.rc</span></div><div style="left:53px;top:165px;width:9px;height:9px;border:1px solid #7898b5;border-radius:2px;background:linear-gradient(135deg,#fff 20%,#cfc9b6)"><div style="left:1px;top:3px;width:5px;height:1px;background:#000"></div></div><svg style="left:67px;top:160px" width="16" height="16" viewBox="0 0 16 16" ><defs><linearGradient id="fg" x1="0" y1="0" x2="1" y2="1"><stop offset="0" stop-color="#fff6c8"/><stop offset=".5" stop-color="#f7d36a"/><stop offset="1" stop-color="#d99a1c"/></linearGradient></defs><path d="M1.500 2.500h4.500l1.500 2h7v8h-13z" fill="#e8c060" stroke="#a88028"/><path d="M1.500 4.500h13.500v8.500h-13.500z" fill="url(#fg)"/><path d="M1.500 13.500h14v-9" fill="none" stroke="#7a5a18"/></svg><div class="t" style="left:89px;top:163px;line-height:14px;height:14px;"><span class="l">Dialog</span></div><svg style="left:87px;top:177px" width="15" height="14" viewBox="0 0 15 14" ><rect x="0.500" y="0.500" width="14" height="13" fill="#ece9d8" stroke="#4a6ec0"/><rect x="0" y="0" width="15" height="3" fill="#4a7ee0"/><rect x="0" y="0" width="15" height="1" fill="#7aa6f4"/><path d="M0 13.500h15" stroke="#2f4f96"/><path d="M2 6.500h2.500M2 10.500h2.500" stroke="#2f4f96"/><rect x="6.500" y="5.500" width="6" height="2" fill="#fff" stroke="#4a6ec0"/><rect x="6.500" y="9.500" width="6" height="2" fill="#fff" stroke="#4a6ec0"/></svg><div class="t" style="left:107px;top:179px;line-height:14px;height:14px;"><span class="l">IDD_DIALOG1</span></div><svg style="left:87px;top:193px" width="15" height="14" viewBox="0 0 15 14" ><rect x="0.500" y="0.500" width="14" height="13" fill="#ece9d8" stroke="#4a6ec0"/><rect x="0" y="0" width="15" height="3" fill="#4a7ee0"/><rect x="0" y="0" width="15" height="1" fill="#7aa6f4"/><path d="M0 13.500h15" stroke="#2f4f96"/><path d="M2 6.500h2.500M2 10.500h2.500" stroke="#2f4f96"/><rect x="6.500" y="5.500" width="6" height="2" fill="#fff" stroke="#4a6ec0"/><rect x="6.500" y="9.500" width="6" height="2" fill="#fff" stroke="#4a6ec0"/></svg><div class="t" style="left:107px;top:195px;line-height:14px;height:14px;"><span class="l">IDD_DIALOG2</span></div><div style="left:106px;top:209px;width:64px;height:16px;background:#ece9d8"></div><svg style="left:87px;top:209px" width="15" height="14" viewBox="0 0 15 14" ><rect x="0.500" y="0.500" width="14" height="13" fill="#ece9d8" stroke="#4a6ec0"/><rect x="0" y="0" width="15" height="3" fill="#4a7ee0"/><rect x="0" y="0" width="15" height="1" fill="#7aa6f4"/><path d="M0 13.500h15" stroke="#2f4f96"/><path d="M2 6.500h2.500M2 10.500h2.500" stroke="#2f4f96"/><rect x="6.500" y="5.500" width="6" height="2" fill="#fff" stroke="#4a6ec0"/><rect x="6.500" y="9.500" width="6" height="2" fill="#fff" stroke="#4a6ec0"/></svg><div class="t" style="left:107px;top:211px;line-height:14px;height:14px;"><span class="l">IDD_TABBOX</span></div><div style="left:53px;top:229px;width:9px;height:9px;border:1px solid #7898b5;border-radius:2px;background:linear-gradient(135deg,#fff 20%,#cfc9b6)"><div style="left:1px;top:3px;width:5px;height:1px;background:#000"></div></div><svg style="left:67px;top:224px" width="16" height="16" viewBox="0 0 16 16" ><defs><linearGradient id="fg" x1="0" y1="0" x2="1" y2="1"><stop offset="0" stop-color="#fff6c8"/><stop offset=".5" stop-color="#f7d36a"/><stop offset="1" stop-color="#d99a1c"/></linearGradient></defs><path d="M1.500 2.500h4.500l1.500 2h7v8h-13z" fill="#e8c060" stroke="#a88028"/><path d="M1.500 4.500h13.500v8.500h-13.500z" fill="url(#fg)"/><path d="M1.500 13.500h14v-9" fill="none" stroke="#7a5a18"/></svg><div class="t" style="left:89px;top:227px;line-height:14px;height:14px;"><span class="l">Icon</span></div><svg style="left:87px;top:241px" width="14" height="15" viewBox="0 0 14 15" ><path d="M0.500 0.500h9l4 4v9.500h-13z" fill="#d4dcec" stroke="#3a5a8a"/><path d="M9.500 0.500v4h4z" fill="#fff" stroke="#3a5a8a"/><g fill="#3c5a9a"><rect x="2" y="3" width="2" height="2.500"/><rect x="5" y="3" width="2" height="2.500"/><rect x="2" y="6.500" width="2" height="2.500"/><rect x="5" y="6.500" width="2" height="2.500"/><rect x="8" y="6.500" width="2" height="2.500"/><rect x="2" y="10" width="2" height="2.500"/><rect x="5" y="10" width="2" height="2.500"/><rect x="8" y="10" width="2" height="2.500"/></g></svg><div class="t" style="left:107px;top:243px;line-height:14px;height:14px;"><span class="l">IDI_ICON1</span></div><div style="left:194px;top:811px;width:61px;height:20px;background:#fff;border-radius:0 0 3px 3px"></div><svg style="left:15px;top:813px" width="16" height="16" viewBox="0 0 16 16" ><rect x="4.500" y="0.500" width="11" height="9" fill="#dfe8fa" stroke="#5b7fc0"/><rect x="4" y="0" width="12" height="2.500" fill="#3b6fd6"/><path d="M0.500 4.500h3.500l1 1h4v5h-8.500z" fill="#e9b949" stroke="#a87a17" stroke-width=".8"/><circle cx="9" cy="10" r="3" fill="#cfe6fb" stroke="#5a86c8" stroke-width="1.200"/><path d="M11.500 12.500l3 3" stroke="#c89028" stroke-width="2"/></svg><div class="t" style="left:35px;top:815px;line-height:14px;height:14px;color:#fff">解<span class="q qe">…</span></div><svg style="left:76px;top:813px" width="16" height="16" viewBox="0 0 16 16" ><rect x="0.500" y="2.500" width="13" height="9" fill="#e8eefb" stroke="#7b93c8"/><path d="M3 4l3-2 3 2-3 2z" fill="#f2c230" stroke="#b08a10" stroke-width=".5"/><path d="M9 6l3-3 3 2-3 4z" fill="#e25ad0" stroke="#a030a0" stroke-width=".5"/><path d="M9 12l2-2 2 2-2 2z" fill="#5aa0e8" stroke="#3070b8" stroke-width=".5"/><path d="M2 8h5M2 10h4" stroke="#6a86c8"/></svg><div class="t" style="left:96px;top:815px;line-height:14px;height:14px;color:#fff">类<span class="q qe">…</span></div><svg style="left:138px;top:813px" width="16" height="16" viewBox="0 0 16 16" ><rect x="0.500" y="0.500" width="12" height="9" fill="#e8eefb" stroke="#9ab0dc"/><rect x="0" y="0" width="13" height="2.500" fill="#6a90e0"/><rect x="3.500" y="4.500" width="12" height="10" fill="#fff" stroke="#777"/><rect x="3" y="4" width="13" height="2.500" fill="#8e9fc4"/><path d="M5 9h2M8 9h6M5 12h2M8 12h6" stroke="#666"/></svg><div class="t" style="left:158px;top:815px;line-height:14px;height:14px;color:#fff">属<span class="q qe">…</span></div><svg style="left:199px;top:813px" width="16" height="16" viewBox="0 0 16 16" ><rect x="0.500" y="0.500" width="14" height="12" fill="#fff" stroke="#4a6ab8"/><rect x="1" y="1" width="13" height="2.500" fill="#3b6fd6"/><rect x="2" y="4" width="11" height="7" fill="#6a9ae8"/><path d="M3 9l3-3 2 2 2-1 2 3z" fill="#e05030"/><rect x="6.500" y="9.500" width="8" height="6" fill="#e8eefb" stroke="#3a4a78"/><rect x="8" y="11.500" width="2" height="2" fill="#3a4a78"/><rect x="11" y="11.500" width="2" height="2" fill="#3a4a78"/></svg><div class="t" style="left:219px;top:815px;line-height:14px;height:14px;color:#000">资<span class="q qe">…</span></div><svg style="left:261px;top:813px" width="16" height="16" viewBox="0 0 16 16" ><rect x="0.500" y="0.500" width="12" height="10" fill="#f4f7fd" stroke="#5b7fc0"/><rect x="0" y="0" width="13" height="2.500" fill="#3b6fd6"/><circle cx="7.500" cy="8" r="1.500" fill="#3a6fd8"/><rect x="6.200" y="9.500" width="2.600" height="6" rx="1" fill="#3a6fd8"/><circle cx="11" cy="7" r="1.500" fill="#e0a020"/><rect x="9.700" y="8.500" width="2.600" height="7" rx="1" fill="#e0a020"/><circle cx="14.300" cy="8" r="1.500" fill="#d33"/><rect x="13" y="9.500" width="2.600" height="6" rx="1" fill="#d33"/><rect x="10" y="10" width="2" height="5.500" fill="#3a3"/></svg><div class="t" style="left:281px;top:815px;line-height:14px;height:14px;color:#fff">团<span class="q qe">…</span></div>
<!-- doc -->
<div class="t" style="left:328px;top:112px;line-height:14px;height:14px;color:#fff"><span class="l">remove_tab_page_</span><span class="q qe">…</span><span class="l">_DIALOG1 - Dialog</span></div><div style="left:564px;top:109px;width:239px;height:21px;background:linear-gradient(to bottom,#fffcf3 0,#fff3cf 45%,#ffe8a6 100%);border-radius:3px 3px 0 0"></div><div class="t" style="left:568px;top:112px;line-height:14px;height:14px;"><span class="l">remove_tab_page_</span><span class="q qe">…</span><span class="l">D_TABBOX - Dialog</span></div><svg style="left:789px;top:115px" width="9" height="9" viewBox="0 0 9 9"><path d="M1 1l7 7M8 1l-7 7" stroke="#75633d" stroke-width="1.600"/></svg><svg style="left:927px;top:115px" width="8" height="8" viewBox="0 0 8 8"><path d="M0 1h8" stroke="#ced4dd" stroke-width="1.500"/><path d="M0 3.500h8l-4 4z" fill="#ced4dd"/></svg><div style="left:323px;top:129px;width:618px;height:442px;background:#ffe8a6;border-radius:3px"></div><div style="left:323px;top:129px;width:618px;height:2px;background:#fff1c8;border-radius:3px 3px 0 0"></div><div style="left:323px;top:133px;width:618px;height:434px;background:#ece9d8;border-top:1px solid #fff"></div><div style="left:360px;top:140px;width:561px;height:16px;background:#ece9d8;border:1px solid #aca899;border-top-color:#aca899"></div><div style="left:370px;top:140px;width:453px;height:16px;background:#fff;border-top:1px solid #000;border-left:1px solid #000;border-bottom:1px solid #d4d0c8"></div><div style="left:360px;top:140px;width:10px;height:15px;background:linear-gradient(135deg,#fff,#e4e1d4);border:1px solid #aca899;border-radius:1px"></div><div style="left:378px;top:152px;width:540px;height:3px;background-image:linear-gradient(to right,#000 1px,transparent 1px);background-size:9px 3px"></div><div style="left:405px;top:148px;width:513px;height:7px;background-image:linear-gradient(to right,#000 1px,transparent 1px);background-size:45px 7px"></div><div style="left:330px;top:196px;width:16px;height:249px;background:#fff;border-left:1px solid #000;border-right:1px solid #d4d0c8"></div><div style="left:330px;top:196px;width:16px;height:11px;background:linear-gradient(135deg,#fff,#e4e1d4);border:1px solid #aca899;border-radius:1px"></div><div style="left:330px;top:206px;width:16px;height:1px;background:#000"></div><div style="left:341px;top:214px;width:4px;height:231px;background-image:linear-gradient(to bottom,#000 1px,transparent 1px);background-size:4px 9px"></div><div style="left:338px;top:241px;width:7px;height:200px;background-image:linear-gradient(to bottom,#000 1px,transparent 1px);background-size:7px 45px"></div><div style="left:352px;top:162px;width:572px;height:340px;background:#fff"></div><div style="left:924px;top:161px;width:16px;height:341px;background:linear-gradient(to right,#f3f1ec 0,#fdfdfb 40%,#fefefb 100%)"></div><div style="left:924px;top:162px;width:16px;height:16px;background:linear-gradient(135deg,#e1eafe 0,#c6d6fb 50%,#b5c9f6 100%);border:1px solid #fff;border-radius:3px;box-shadow:0 0 0 1px #b4c8f6 inset"><svg style="left:2px;top:2px" width="10" height="10" viewBox="0 0 10 10"><path d="M1.500 6l3.500-3.500 3.500 3.500" fill="none" stroke="#4d6185" stroke-width="2"/></svg></div><div style="left:924px;top:485px;width:16px;height:16px;background:linear-gradient(135deg,#e1eafe 0,#c6d6fb 50%,#b5c9f6 100%);border:1px solid #fff;border-radius:3px;box-shadow:0 0 0 1px #b4c8f6 inset"><svg style="left:2px;top:2px" width="10" height="10" viewBox="0 0 10 10"><path d="M1.500 3l3.500 3.500 3.500-3.500" fill="none" stroke="#4d6185" stroke-width="2"/></svg></div><div style="left:925px;top:180px;width:15px;height:289px;background:linear-gradient(to right,#c9d8fc 0,#bfd0fb 50%,#b0c4f5 100%);border:1px solid #fff;border-radius:2px;box-shadow:0 0 0 1px #98b4ee inset"><div style="left:4px;top:140px;width:6px;height:1px;background:#eef4fe"></div><div style="left:5px;top:141px;width:6px;height:1px;background:#8cb0f8"></div><div style="left:4px;top:142px;width:6px;height:1px;background:#eef4fe"></div><div style="left:5px;top:143px;width:6px;height:1px;background:#8cb0f8"></div><div style="left:4px;top:144px;width:6px;height:1px;background:#eef4fe"></div><div style="left:5px;top:145px;width:6px;height:1px;background:#8cb0f8"></div><div style="left:4px;top:146px;width:6px;height:1px;background:#eef4fe"></div><div style="left:5px;top:147px;width:6px;height:1px;background:#8cb0f8"></div></div><div style="left:352px;top:502px;width:572px;height:16px;background:linear-gradient(to bottom,#f3f1ec 0,#fdfdfb 40%,#fefefb 100%)"></div><div style="left:353px;top:502px;width:16px;height:16px;background:linear-gradient(135deg,#e1eafe 0,#c6d6fb 50%,#b5c9f6 100%);border:1px solid #fff;border-radius:3px;box-shadow:0 0 0 1px #b4c8f6 inset"><svg style="left:2px;top:2px" width="10" height="10" viewBox="0 0 10 10"><path d="M6 1.500l-3.500 3.500 3.500 3.500" fill="none" stroke="#4d6185" stroke-width="2"/></svg></div><div style="left:907px;top:502px;width:16px;height:16px;background:linear-gradient(135deg,#e1eafe 0,#c6d6fb 50%,#b5c9f6 100%);border:1px solid #fff;border-radius:3px;box-shadow:0 0 0 1px #b4c8f6 inset"><svg style="left:2px;top:2px" width="10" height="10" viewBox="0 0 10 10"><path d="M3 1.500l3.500 3.500-3.500 3.500" fill="none" stroke="#4d6185" stroke-width="2"/></svg></div><div style="left:370px;top:503px;width:476px;height:15px;background:linear-gradient(to bottom,#c9d8fc 0,#bfd0fb 50%,#b0c4f5 100%);border:1px solid #fff;border-radius:2px;box-shadow:0 0 0 1px #98b4ee inset"><div style="top:4px;left:234px;height:6px;width:1px;background:#eef4fe"></div><div style="top:5px;left:235px;height:6px;width:1px;background:#8cb0f8"></div><div style="top:4px;left:236px;height:6px;width:1px;background:#eef4fe"></div><div style="top:5px;left:237px;height:6px;width:1px;background:#8cb0f8"></div><div style="top:4px;left:238px;height:6px;width:1px;background:#eef4fe"></div><div style="top:5px;left:239px;height:6px;width:1px;background:#8cb0f8"></div><div style="top:4px;left:240px;height:6px;width:1px;background:#eef4fe"></div><div style="top:5px;left:241px;height:6px;width:1px;background:#8cb0f8"></div></div><div style="left:924px;top:502px;width:17px;height:16px;background:#ece9d8"></div><div style="left:357px;top:167px;width:567px;height:281px;background:linear-gradient(to right,#7b90e0 0,#6175d4 3px,#6175d4 100%);border-radius:7px 7px 0 0"></div><div style="left:357px;top:167px;width:567px;height:29px;border-radius:7px 7px 0 0;background:linear-gradient(to bottom,#7a93df 0,#95aeee 6%,#7c98e2 14%,#7590de 30%,#7792e0 60%,#7d9ce8 80%,#84a4ee 92%,#7a98e2 100%)"></div><div style="left:360px;top:196px;width:561px;height:249px;background:#ece9d8"></div><div style="left:362px;top:176px;width:15px;height:12px;background:#fff;border:1px solid #a9bdf0;border-top:3px solid #4a7be0;border-radius:1px"></div><div class="t" style="left:381px;top:173px;line-height:18px;font:bold 14px/18px 'Liberation Sans','Noto Sans CJK SC',sans-serif;color:#d8e4f8">移除选项卡灰色背景</div><div style="left:853px;top:172px;width:20px;height:21px;border:1px solid #e8eefc;border-radius:3px;background:linear-gradient(135deg,#6c90ee 0%,#4a70e0 45%,#3c62d8 75%,#5a84ec 100%)"><div style="left:4px;top:12px;width:7px;height:3px;background:#fff"></div></div><div style="left:876px;top:172px;width:20px;height:21px;border:1px solid #e8eefc;border-radius:3px;border-color:#9eb3ee;background:linear-gradient(135deg,#86a0ea 0%,#7592e4 100%)"><div style="left:4px;top:4px;width:10px;height:10px;border:1px solid #8fa8ec;border-top:3px solid #8fa8ec"></div></div><div style="left:898px;top:172px;width:20px;height:21px;border:1px solid #e8eefc;border-radius:3px;background:linear-gradient(135deg,#d88b9c 0%,#c0667a 45%,#b45a70 75%,#c87488 100%)"><svg style="left:3px;top:3px" width="13" height="13" viewBox="0 0 13 13"><path d="M1.800 2l9 9.500M10.800 2l-9 9.500" stroke="#fff" stroke-width="2.200"/></svg></div><div style="left:370px;top:206px;width:453px;height:1px;background-image:linear-gradient(to right,#0000ff 1px,transparent 1px);background-size:2px 1px"></div><div style="left:370px;top:206px;width:1px;height:239px;background-image:linear-gradient(to bottom,#0000ff 1px,transparent 1px);background-size:1px 2px"></div><div style="left:823px;top:435px;width:1px;height:10px;background-image:linear-gradient(to bottom,#0000ff 1px,transparent 1px);background-size:1px 2px"></div><div style="left:371px;top:226px;width:538px;height:207px;background:linear-gradient(to bottom,#fcfcfe 0,#f8f8f6 50%,#f4f3ee 100%);border:1px solid #919b9c"></div><div style="left:423px;top:209px;width:45px;height:18px;background:linear-gradient(to bottom,#fff 0,#f5f4ee 70%,#e6e5dc 100%);border:1px solid #919b9c;border-bottom:none;border-radius:3px 3px 0 0"></div><div class="t" style="left:426px;top:213px;line-height:14px;height:14px;"><span class="l">Tab 2</span></div><div style="left:470px;top:209px;width:46px;height:18px;background:linear-gradient(to bottom,#fff 0,#f5f4ee 70%,#e6e5dc 100%);border:1px solid #919b9c;border-bottom:none;border-radius:3px 3px 0 0"></div><div class="t" style="left:474px;top:213px;line-height:14px;height:14px;"><span class="l">Tab 3</span></div><div style="left:518px;top:209px;width:46px;height:18px;background:linear-gradient(to bottom,#fff 0,#f5f4ee 70%,#e6e5dc 100%);border:1px solid #919b9c;border-bottom:none;border-radius:3px 3px 0 0"></div><div class="t" style="left:522px;top:213px;line-height:14px;height:14px;"><span class="l">Tab 4</span></div><div style="left:565px;top:209px;width:46px;height:18px;background:linear-gradient(to bottom,#fff 0,#f5f4ee 70%,#e6e5dc 100%);border:1px solid #919b9c;border-bottom:none;border-radius:3px 3px 0 0"></div><div class="t" style="left:570px;top:213px;line-height:14px;height:14px;"><span class="l">Tab 5</span></div><div style="left:371px;top:206px;width:52px;height:21px;background:#fcfcfe;border:1px solid #919b9c;border-bottom:none;border-top:none;border-radius:3px 3px 0 0"></div><div style="left:371px;top:206px;width:52px;height:3px;background:#ffc73c;border-radius:3px 3px 0 0;border-top:1px solid #e68b2c"></div><div class="t" style="left:378px;top:211px;line-height:14px;height:14px;"><span class="l">Tab 1</span></div><div style="left:352px;top:162px;width:6px;height:6px;border:1px solid #3c5070;border-top:none;border-left:none;width:5px;height:5px"></div><div style="left:639px;top:162px;width:6px;height:5px;border:1px solid #3c5070;border-top:none;background:#fff"></div><div style="left:352px;top:448px;width:6px;height:5px;border:1px solid #3c5070;border-left:none;background:#fff"></div><div style="left:352px;top:305px;width:5px;height:6px;border:1px solid #3c5070;border-left:none;background:#fff"></div><div style="left:639px;top:448px;width:6px;height:6px;background:#3c5070"></div><div style="left:328px;top:526px;width:13px;height:13px;border:1px solid #1c5180;background:linear-gradient(135deg,#dcdcd7 0,#fff 100%)"></div><div class="t" style="left:344px;top:526px;line-height:14px;height:14px;">原型图像<span class="l">:</span></div><div style="left:398px;top:524px;width:343px;height:18px;border:1px solid #7f9db9;background:#ece9d8"></div><div style="left:742px;top:525px;width:18px;height:16px;border:1px solid #c9c7ba;border-radius:3px;background:#f0eee4"><div class="t" style="left:4px;top:0px;line-height:14px;height:14px;color:#aca899"><span class="l">..</span></div></div><div class="t" style="left:350px;top:547px;line-height:14px;height:14px;color:#aca899">透明度<span class="l">:</span></div><div style="left:402px;top:550px;width:137px;height:4px;border:1px solid #c5c2b5;border-radius:2px;background:#f4f3ee"></div><div style="left:468px;top:546px;width:8px;height:13px;border:1px solid #bfbcae;border-radius:2px;background:#f4f3ee"></div><div class="t" style="left:547px;top:547px;line-height:14px;height:14px;color:#aca899"><span class="l">50%</span></div><div class="t" style="left:582px;top:547px;line-height:14px;height:14px;color:#aca899">偏移量</div><div class="t" style="left:622px;top:547px;line-height:14px;height:14px;color:#aca899"><span class="l">X:</span></div><div style="left:636px;top:544px;width:54px;height:18px;border:1px solid #7f9db9;background:#fff"><div class="t" style="left:3px;top:1px;font:12px/14px 'Liberation Sans',sans-serif">0</div><div style="left:37px;top:1px;width:15px;height:7px;background:#eceade;border:1px solid #dddace;border-radius:2px"></div><div style="left:37px;top:8px;width:15px;height:7px;background:#eceade;border:1px solid #dddace;border-radius:2px"></div><svg style="left:41px;top:3px" width="7" height="11" viewBox="0 0 7 11"><path d="M1 3.500l2.500-2.500 2.500 2.500M1 7.500l2.500 2.500 2.500-2.500" fill="none" stroke="#c9c7ba" stroke-width="1.300"/></svg></div><div style="left:708px;top:544px;width:54px;height:18px;border:1px solid #7f9db9;background:#fff"><div class="t" style="left:3px;top:1px;font:12px/14px 'Liberation Sans',sans-serif">0</div><div style="left:37px;top:1px;width:15px;height:7px;background:#eceade;border:1px solid #dddace;border-radius:2px"></div><div style="left:37px;top:8px;width:15px;height:7px;background:#eceade;border:1px solid #dddace;border-radius:2px"></div><svg style="left:41px;top:3px" width="7" height="11" viewBox="0 0 7 11"><path d="M1 3.500l2.500-2.500 2.500 2.500M1 7.500l2.500 2.500 2.500-2.500" fill="none" stroke="#c9c7ba" stroke-width="1.300"/></svg></div><div class="t" style="left:694px;top:547px;line-height:14px;height:14px;color:#aca899"><span class="l">Y:</span></div>
<!-- output -->
<div class="twt" style="left:323px;top:577px;width:618px;height:19px;"></div><div class="t" style="left:325px;top:580px;line-height:14px;height:14px;color:#fff">输出</div><svg style="left:897px;top:581px" width="41" height="12" viewBox="0 0 41 12"><path d="M0 3.500h8l-4 4z" fill="#fff"/><path d="M17.500 1v5.500M21.500 1v5.500M17.500 1.500h4M15.500 6.500h8M19.500 7v4.500" stroke="#fff" fill="none"/><path d="M20.500 1v5" stroke="#fff"/><path d="M30.500 2l9 8M39.500 2l-9 8" stroke="#fff" stroke-width="1.600"/></svg><div style="left:323px;top:596px;width:618px;height:26px;background:linear-gradient(to bottom,#c5cfdf 0,#bcc7d8 50%,#b4bfd2 100%)"></div><div class="t" style="left:330px;top:603px;line-height:14px;height:14px;">显示输出来源<span class="l">(S):</span></div><div style="left:432px;top:599px;width:300px;height:20px;background:#fff;border:1px solid #8591a8"><div class="t" style="left:3px;top:3px;line-height:14px">调试</div><svg style="left:290px;top:8px" width="5" height="3" viewBox="0 0 5 3"><path d="M0 0h5l-2.500 3z" fill="#1e1e1e"/></svg></div><div style="left:738px;top:600px;width:1px;height:18px;background:#8591a8"></div><div style="left:739px;top:600px;width:1px;height:18px;background:#d5dceb"></div><svg style="left:745px;top:601px" width="16" height="16" viewBox="0 0 16 16" ><path d="M3.500 2.500h7l2 2v9h-9z" fill="#dfe2e8" stroke="#a3a9b8"/><path d="M8 14v-7M5 9.500l3-3 3 3" fill="none" stroke="#a3a9b8" stroke-width="1.600"/></svg><div style="left:767px;top:600px;width:1px;height:18px;background:#8591a8"></div><div style="left:768px;top:600px;width:1px;height:18px;background:#d5dceb"></div><svg style="left:774px;top:601px" width="16" height="16" viewBox="0 0 16 16" ><path d="M6.500 1.500h6l2 2v7h-8z" fill="#dfe2e8" stroke="#a3a9b8"/><path d="M0 9.500l5-4v2.500h5v3h-5v2.500z" fill="#a3a9b8"/></svg><svg style="left:796px;top:601px" width="16" height="16" viewBox="0 0 16 16" ><path d="M1.500 1.500h6l2 2v7h-8z" fill="#dfe2e8" stroke="#a3a9b8"/><path d="M16 9.500l-5-4v2.500h-5v3h5v2.500z" fill="#a3a9b8"/></svg><div style="left:818px;top:600px;width:1px;height:18px;background:#8591a8"></div><div style="left:819px;top:600px;width:1px;height:18px;background:#d5dceb"></div><svg style="left:825px;top:601px" width="16" height="16" viewBox="0 0 16 16" ><path d="M1 3.500h11M1 6.500h11M1 9.500h7M1 12.500h6" stroke="#7a8296"/><path d="M9 8l6 6M15 8l-6 6" stroke="#e03010" stroke-width="2"/></svg><div style="left:847px;top:600px;width:1px;height:18px;background:#8591a8"></div><div style="left:848px;top:600px;width:1px;height:18px;background:#d5dceb"></div><svg style="left:854px;top:602px" width="16" height="14" viewBox="0 0 16 14" ><rect x="0.500" y="0.500" width="15" height="12" fill="#fff" stroke="#2a4ab0"/><rect x="0" y="0" width="16" height="3" fill="#2a55d0"/><path d="M4 6h7v3.500h-6M7 7.500l-2.500 2 2.500 2" fill="none" stroke="#000" stroke-width="1.300"/></svg><div style="left:323px;top:622px;width:601px;height:173px;background:#fff;overflow:hidden"><div class="t" style="left:12px;top:-6px;line-height:14px"><span class="l">the PDB file</span></div><div class="t" style="left:12px;top:9px;line-height:14px"><span class="q">“</span><span class="l">remove_tab_page_background.exe</span><span class="q">”</span><span class="l">: </span>已加载<span class="q">“</span><span class="l">C:\WINDOWS\system32\MSCTF.dll</span><span class="q">”</span><span class="q">，</span><span class="l">Cannot find or open</span></div><div class="t" style="left:12px;top:24px;line-height:14px"><span class="l">the PDB file</span></div><div class="t" style="left:12px;top:39px;line-height:14px"><span class="q">“</span><span class="l">remove_tab_page_background.exe</span><span class="q">”</span><span class="l">: </span>已加载<span class="q">“</span><span class="l">C:\WINDOWS\system32\version.dll</span><span class="q">”</span><span class="q">，</span><span class="l">Cannot find or open</span></div><div class="t" style="left:18px;top:54px;line-height:14px"><span class="l">the PDB file</span></div><div class="t" style="left:12px;top:69px;line-height:14px"><span class="q">“</span><span class="l">remove_tab_page_background.exe</span><span class="q">”</span><span class="l">: </span>已卸载<span class="q">“</span><span class="l">C:\WINDOWS\system32\version.dll</span><span class="q">”</span></div><div class="t" style="left:12px;top:84px;line-height:14px"><span class="q">“</span><span class="l">remove_tab_page_background.exe</span><span class="q">”</span><span class="l">: </span>已加载<span class="q">“</span><span class="l">C:\WINDOWS\system32\MSCTFIME.IME</span><span class="q">”</span><span class="q">，</span><span class="l">Cannot find or</span></div><div class="t" style="left:12px;top:99px;line-height:14px"><span class="l">open the PDB file</span></div><div class="t" style="left:12px;top:114px;line-height:14px"><span class="q">“</span><span class="l">remove_tab_page_background.exe</span><span class="q">”</span><span class="l">: </span>已加载<span class="q">“</span><span class="l">C:\WINDOWS\system32\ole32.dll</span><span class="q">”</span><span class="q">，</span><span class="l">Cannot find or open</span></div><div class="t" style="left:12px;top:129px;line-height:14px"><span class="l">the PDB file</span></div><div class="t" style="left:12px;top:144px;line-height:14px">程序<span class="q">“</span><span class="l">[4320] remove_tab_page_background.exe: </span>本机<span class="q">”</span>已退出<span class="q">，</span>返回值为<span class="l"> 0 (0x0)</span>。</div></div><div style="left:924px;top:622px;width:17px;height:173px;background:#fdfdfb"></div><div style="left:924px;top:622px;width:16px;height:173px;background:linear-gradient(to right,#f3f1ec 0,#fdfdfb 40%,#fefefb 100%)"></div><div style="left:924px;top:623px;width:16px;height:16px;background:linear-gradient(135deg,#e1eafe 0,#c6d6fb 50%,#b5c9f6 100%);border:1px solid #fff;border-radius:3px;box-shadow:0 0 0 1px #b4c8f6 inset"><svg style="left:2px;top:2px" width="10" height="10" viewBox="0 0 10 10"><path d="M1.500 6l3.500-3.500 3.500 3.500" fill="none" stroke="#4d6185" stroke-width="2"/></svg></div><div style="left:924px;top:778px;width:16px;height:16px;background:linear-gradient(135deg,#e1eafe 0,#c6d6fb 50%,#b5c9f6 100%);border:1px solid #fff;border-radius:3px;box-shadow:0 0 0 1px #b4c8f6 inset"><svg style="left:2px;top:2px" width="10" height="10" viewBox="0 0 10 10"><path d="M1.500 3l3.500 3.500 3.500-3.500" fill="none" stroke="#4d6185" stroke-width="2"/></svg></div><div style="left:925px;top:730px;width:15px;height:17px;background:linear-gradient(to right,#c9d8fc 0,#bfd0fb 50%,#b0c4f5 100%);border:1px solid #fff;border-radius:2px;box-shadow:0 0 0 1px #98b4ee inset"><div style="left:4px;top:4px;width:6px;height:1px;background:#eef4fe"></div><div style="left:5px;top:5px;width:6px;height:1px;background:#8cb0f8"></div><div style="left:4px;top:6px;width:6px;height:1px;background:#eef4fe"></div><div style="left:5px;top:7px;width:6px;height:1px;background:#8cb0f8"></div><div style="left:4px;top:8px;width:6px;height:1px;background:#eef4fe"></div><div style="left:5px;top:9px;width:6px;height:1px;background:#8cb0f8"></div><div style="left:4px;top:10px;width:6px;height:1px;background:#eef4fe"></div><div style="left:5px;top:11px;width:6px;height:1px;background:#8cb0f8"></div></div><div style="left:323px;top:795px;width:601px;height:16px;background:linear-gradient(to bottom,#f3f1ec 0,#fdfdfb 40%,#fefefb 100%)"></div><div style="left:324px;top:795px;width:16px;height:16px;background:linear-gradient(135deg,#fefefb 0,#f0efe6 100%);border:1px solid #fff;border-radius:3px;box-shadow:0 0 0 1px #e0dfd0 inset"><svg style="left:2px;top:2px" width="10" height="10" viewBox="0 0 10 10"><path d="M6 1.500l-3.500 3.500 3.500 3.500" fill="none" stroke="#c9c7ba" stroke-width="2"/></svg></div><div style="left:907px;top:795px;width:16px;height:16px;background:linear-gradient(135deg,#fefefb 0,#f0efe6 100%);border:1px solid #fff;border-radius:3px;box-shadow:0 0 0 1px #e0dfd0 inset"><svg style="left:2px;top:2px" width="10" height="10" viewBox="0 0 10 10"><path d="M3 1.500l3.500 3.500-3.500 3.500" fill="none" stroke="#c9c7ba" stroke-width="2"/></svg></div><div style="left:924px;top:795px;width:17px;height:16px;background:#ece9d8"></div><div style="left:425px;top:811px;width:54px;height:20px;background:#fff;border-radius:0 0 3px 3px"></div><svg style="left:327px;top:813px" width="16" height="16" viewBox="0 0 16 16" ><rect x="0.500" y="1.500" width="12" height="10" fill="#fff" stroke="#5b7fc0"/><rect x="0" y="1" width="13" height="2.500" fill="#3b6fd6"/><path d="M3 4.500v5M1 7h4.500M1.500 5l3 4M4.500 5l-3 4" stroke="#f0c020"/><rect x="8.500" y="8.500" width="6" height="6" fill="#7ab0f0" stroke="#1a2a68"/></svg><div class="t" style="left:348px;top:815px;line-height:14px;height:14px;color:#fff">代码定义窗口</div><svg style="left:431px;top:813px" width="16" height="16" viewBox="0 0 16 16" ><rect x="1.500" y="1.500" width="12" height="12" fill="#fff" stroke="#5070b0"/><rect x="1" y="1" width="13" height="2.500" fill="#3b6fd6"/><path d="M3.500 5.500h8M3.500 7.500h8M3.500 9.500h8M3.500 11.500h6" stroke="#3a5ab8"/></svg><div class="t" style="left:450px;top:815px;line-height:14px;height:14px;">输出</div><svg style="left:483px;top:813px" width="16" height="16" viewBox="0 0 16 16" ><rect x="0.500" y="0.500" width="13" height="10" fill="#e8eefb" stroke="#5b7fc0"/><rect x="0" y="0" width="14" height="2.500" fill="#3b6fd6"/><path d="M2 5h9M2 7.500h9" stroke="#3a4a78"/><path d="M8 9h2.500v5h-2.500zM12 9h2.500v5h-2.500zM10 10.500h2.500v2h-2.500z" fill="#333"/></svg><div class="t" style="left:504px;top:815px;line-height:14px;height:14px;color:#fff">查找结果<span class="l"> 1</span></div><svg style="left:574px;top:813px" width="16" height="16" viewBox="0 0 16 16" ><path d="M3 5l3-3 3 3-3 3z" fill="#f2c230" stroke="#b08a10" stroke-width=".6"/><path d="M8 4l4-3 3 3-4 3z" fill="#5aa0e8" stroke="#3070b8" stroke-width=".6"/><path d="M1 9h2.500v6h-2.500zM5.500 9h2.500v6h-2.500zM3 10.500h3v2.500h-3z" fill="#333"/><path d="M9 9l2 3" stroke="#a030a0"/></svg><div class="t" style="left:594px;top:815px;line-height:14px;height:14px;color:#fff">查找符号结果</div>
<!-- toolbox -->
<div class="twt" style="left:947px;top:109px;width:339px;height:19px;"></div><div class="t" style="left:949px;top:112px;line-height:14px;height:14px;color:#fff">工具箱</div><svg style="left:1242px;top:112px" width="41" height="12" viewBox="0 0 41 12"><path d="M0 3.500h8l-4 4z" fill="#fff"/><path d="M17.500 1v5.500M21.500 1v5.500M17.500 1.500h4M15.500 6.500h8M19.500 7v4.500" stroke="#fff" fill="none"/><path d="M20.500 1v5" stroke="#fff"/><path d="M30.500 2l9 8M39.500 2l-9 8" stroke="#fff" stroke-width="1.600"/></svg><div style="left:947px;top:128px;width:339px;height:405px;background:#fff;overflow:hidden"><div style="left:2px;top:1px;width:318px;height:15px;background:linear-gradient(to bottom,#fffcf2 0,#fff4d2 100%);border:1px solid #e5c365"></div><div style="left:4px;top:4px;width:9px;height:9px;border:1px solid #848484;background:#fff"><div style="left:1px;top:3px;width:5px;height:1px;background:#000"></div></div><div class="t" style="left:15px;top:2px;line-height:14px">对话框编辑器</div><svg style="left:16px;top:19px" width="16" height="16" viewBox="0 0 16 16" ><path d="M4 0v13l3-3 2.500 5.500 2-1-2.500-5.500h4.500z" fill="#000"/></svg><div class="t" style="left:48px;top:21px;line-height:14px">指针</div><svg style="left:16px;top:40px" width="16" height="16" viewBox="0 0 16 16" ><rect x="2.500" y="2.500" width="11" height="7" rx="1.500" fill="#d4d0c8" stroke="#000"/><path d="M1 14.500h14" stroke="#000"/></svg><div class="t" style="left:48px;top:42px;line-height:14px"><span class="l">Button</span></div><svg style="left:16px;top:61px" width="16" height="16" viewBox="0 0 16 16" ><rect x="2.500" y="2.500" width="11" height="11" fill="#fff" stroke="#000"/><path d="M5 5l6 6M11 5l-6 6" stroke="#000" stroke-width="2"/></svg><div class="t" style="left:48px;top:63px;line-height:14px"><span class="l">Check Box</span></div><svg style="left:16px;top:82px" width="16" height="16" viewBox="0 0 16 16" ><text x="0" y="12" font-family="Liberation Sans,sans-serif" font-weight="bold" font-size="12" fill="#000">ab</text><path d="M14.500 2v11M1 15.500h14" stroke="#000"/></svg><div class="t" style="left:48px;top:84px;line-height:14px"><span class="l">Edit Control</span></div><svg style="left:16px;top:103px" width="16" height="16" viewBox="0 0 16 16" ><path d="M1.500 1.500h13v4h-13zM1.500 5.500v8.500h13v-8.500M10.500 1.500v12.500M3 8h6M3 10.500h6M3 13h6M12 8h2M12 10.500h2" fill="none" stroke="#000"/><path d="M1 15.500h14" stroke="#000"/><path d="M11.500 3h2l-1 1.500z" fill="#000"/></svg><div class="t" style="left:48px;top:105px;line-height:14px"><span class="l">Combo Box</span></div><svg style="left:16px;top:124px" width="16" height="16" viewBox="0 0 16 16" ><path d="M1.500 3.500h13v9h-13zM8.500 3.500v9M3 6h4M3 8h4M3 10h4M10 6h3M10 8h3M10 10h3" fill="none" stroke="#000"/><path d="M1 15.500h14" stroke="#000"/></svg><div class="t" style="left:48px;top:126px;line-height:14px"><span class="l">List Box</span></div><svg style="left:16px;top:145px" width="16" height="16" viewBox="0 0 16 16" ><path d="M3 2.500h-1.500v12h14" fill="none" stroke="#000"/><text x="4" y="5" font-family="Liberation Sans,sans-serif" font-size="5.500" fill="#000">xyz</text></svg><div class="t" style="left:48px;top:147px;line-height:14px"><span class="l">Group Box</span></div><svg style="left:16px;top:166px" width="16" height="16" viewBox="0 0 16 16" ><circle cx="8" cy="8" r="4.500" fill="#fff" stroke="#555"/><circle cx="8" cy="8" r="2" fill="#000"/></svg><div class="t" style="left:48px;top:168px;line-height:14px"><span class="l">Radio Button</span></div><svg style="left:16px;top:187px" width="16" height="16" viewBox="0 0 16 16" ><text x="1" y="11" font-family="Liberation Serif,serif" font-style="italic" font-weight="bold" font-size="12" fill="#000">Aa</text><path d="M1 14.500h14" stroke="#000"/></svg><div class="t" style="left:48px;top:189px;line-height:14px"><span class="l">Static Text</span></div><svg style="left:16px;top:208px" width="16" height="16" viewBox="0 0 16 16" ><rect x="1.500" y="0.500" width="13" height="13" fill="#fff" stroke="#000"/><path d="M2 13v-4c1-1 1-4 2-7l1.500 3 1-3 1 4-1 3 2-1v5z" fill="#000"/><path d="M8 9.500h5M9 12h4M6 6h3" stroke="#000"/><circle cx="11.500" cy="4" r="1.600" fill="none" stroke="#000"/><path d="M1 15.500h14" stroke="#000"/></svg><div class="t" style="left:48px;top:210px;line-height:14px"><span class="l">Picture Control</span></div><svg style="left:16px;top:229px" width="16" height="16" viewBox="0 0 16 16" ><rect x="1.500" y="3.500" width="13" height="7" fill="#fff" stroke="#000"/><path d="M8 3.500v7" stroke="#000"/><path d="M6.500 5v4l-3-2zM9.500 5v4l3-2z" fill="#000"/><path d="M1 14.500h14" stroke="#000"/></svg><div class="t" style="left:48px;top:231px;line-height:14px"><span class="l">Horizontal Scroll Bar</span></div><svg style="left:16px;top:250px" width="16" height="16" viewBox="0 0 16 16" ><rect x="4.500" y="0.500" width="7" height="12" fill="#fff" stroke="#000"/><path d="M4.500 6.500h7" stroke="#000"/><path d="M6 5h4l-2-3zM6 8h4l-2 3z" fill="#000"/><path d="M1 14.500h14" stroke="#000"/></svg><div class="t" style="left:48px;top:252px;line-height:14px"><span class="l">Vertical Scroll Bar</span></div><svg style="left:16px;top:271px" width="16" height="16" viewBox="0 0 16 16" ><path d="M1 7.500h14" stroke="#000" stroke-width="1.500"/><rect x="4.500" y="3.500" width="3" height="8" rx="1" fill="#fff" stroke="#000"/><path d="M1 14.500h14" stroke="#000"/></svg><div class="t" style="left:48px;top:273px;line-height:14px"><span class="l">Slider Control</span></div><svg style="left:16px;top:292px" width="16" height="16" viewBox="0 0 16 16" ><path d="M4 6h8l-4-5zM4 9h8l-4 5z" fill="#000"/><path d="M3.500 7.500h9M1 15.500h14" stroke="#000"/></svg><div class="t" style="left:48px;top:294px;line-height:14px"><span class="l">Spin Control</span></div><svg style="left:16px;top:313px" width="16" height="16" viewBox="0 0 16 16" ><rect x="1.500" y="4.500" width="13" height="6" fill="#fff" stroke="#000"/><path d="M3.500 5v5M6 5v5M8.500 5v5M11 5v5" stroke="#000" stroke-width="2"/><path d="M1 14.500h14" stroke="#000"/></svg><div class="t" style="left:48px;top:315px;line-height:14px"><span class="l">Progress Control</span></div><svg style="left:16px;top:334px" width="16" height="16" viewBox="0 0 16 16" ><rect x="1.500" y="1.500" width="9" height="5" fill="#e8eefb" stroke="#6a86c8"/><path d="M5 6l4-2 6 3.500c1 2 0 5-2 6l-4-1.500z" fill="#f0c050" stroke="#a07818" stroke-width=".8"/><path d="M9 7l3 5M11 6.500l2.500 4" stroke="#a07818" stroke-width=".7"/></svg><div class="t" style="left:48px;top:336px;line-height:14px"><span class="l">Hot Key</span></div><svg style="left:16px;top:355px" width="16" height="16" viewBox="0 0 16 16" ><rect x="1.500" y="1.500" width="13" height="12" fill="#e4ecfb" stroke="#5b7fc0"/><rect x="1" y="1" width="14" height="3" fill="#4a7be0"/><path d="M3 6.500h3M7 6.500h6M3 9h3M7 9h6M3 11.500h3M7 11.500h6" stroke="#8aa0d0"/></svg><div class="t" style="left:48px;top:357px;line-height:14px"><span class="l">List Control</span></div><svg style="left:16px;top:376px" width="16" height="16" viewBox="0 0 16 16" ><path d="M2 0.500h5M4.500 0.500v14M4.500 6.500h3M4.500 10.500h3M4.500 14.500h3" fill="none" stroke="#000" stroke-width="1.300"/><path d="M8 6.500h6M8 10.500h6M8 14.500h6" stroke="#000" stroke-width="2"/><path d="M1 16.500h14" stroke="#000"/></svg><div class="t" style="left:48px;top:378px;line-height:14px"><span class="l">Tree Control</span></div><svg style="left:16px;top:397px" width="16" height="16" viewBox="0 0 16 16" ><path d="M1.500 4v-2.500h4v2.500h1v-2.500h4v2.500h1v-2.500h3v13h-13z" fill="#fff" stroke="#000"/></svg><div class="t" style="left:48px;top:399px;line-height:14px"><span class="l">Tab Control</span></div></div><div style="left:1270px;top:128px;width:16px;height:405px;background:linear-gradient(to right,#f3f1ec 0,#fdfdfb 40%,#fefefb 100%)"></div><div style="left:1270px;top:129px;width:16px;height:16px;background:linear-gradient(135deg,#e1eafe 0,#c6d6fb 50%,#b5c9f6 100%);border:1px solid #fff;border-radius:3px;box-shadow:0 0 0 1px #b4c8f6 inset"><svg style="left:2px;top:2px" width="10" height="10" viewBox="0 0 10 10"><path d="M1.500 6l3.500-3.500 3.500 3.500" fill="none" stroke="#4d6185" stroke-width="2"/></svg></div><div style="left:1270px;top:516px;width:16px;height:16px;background:linear-gradient(135deg,#e1eafe 0,#c6d6fb 50%,#b5c9f6 100%);border:1px solid #fff;border-radius:3px;box-shadow:0 0 0 1px #b4c8f6 inset"><svg style="left:2px;top:2px" width="10" height="10" viewBox="0 0 10 10"><path d="M1.500 3l3.500 3.500 3.500-3.500" fill="none" stroke="#4d6185" stroke-width="2"/></svg></div><div style="left:1271px;top:147px;width:15px;height:156px;background:linear-gradient(to right,#c9d8fc 0,#bfd0fb 50%,#b0c4f5 100%);border:1px solid #fff;border-radius:2px;box-shadow:0 0 0 1px #98b4ee inset"><div style="left:4px;top:74px;width:6px;height:1px;background:#eef4fe"></div><div style="left:5px;top:75px;width:6px;height:1px;background:#8cb0f8"></div><div style="left:4px;top:76px;width:6px;height:1px;background:#eef4fe"></div><div style="left:5px;top:77px;width:6px;height:1px;background:#8cb0f8"></div><div style="left:4px;top:78px;width:6px;height:1px;background:#eef4fe"></div><div style="left:5px;top:79px;width:6px;height:1px;background:#8cb0f8"></div><div style="left:4px;top:80px;width:6px;height:1px;background:#eef4fe"></div><div style="left:5px;top:81px;width:6px;height:1px;background:#8cb0f8"></div></div><div style="left:1163px;top:533px;width:66px;height:21px;background:#fff;border-radius:0 0 3px 3px"></div><svg style="left:952px;top:535px" width="16" height="16" viewBox="0 0 16 16" ><rect x="0.500" y="1.500" width="8" height="6" fill="#5aa0e8" stroke="#2a4a88"/><rect x="2" y="8" width="5" height="1.500" fill="#aab"/><rect x="6.500" y="6.500" width="9" height="6" fill="#7ab8f0" stroke="#2a4a88"/><rect x="8" y="13" width="6" height="1.500" fill="#aab"/></svg><div class="t" style="left:972px;top:538px;line-height:14px;height:14px;color:#fff">服务器资源管理器</div><svg style="left:1079px;top:535px" width="16" height="16" viewBox="0 0 16 16" ><path d="M2 3h4v10h-4zM10 3h4v10h-4zM6 6h4v4h-4z" fill="#3a3020"/><path d="M2 3h4M10 3h4" stroke="#b8a070" stroke-width="2"/></svg><div class="t" style="left:1098px;top:538px;line-height:14px;height:14px;color:#fff">查找和替换</div><svg style="left:1168px;top:535px" width="16" height="16" viewBox="0 0 16 16" ><path d="M2 14.500l8.500-9" stroke="#d03020" stroke-width="2.200"/><path d="M13.500 14.500l-9-9.500" stroke="#8a8f98" stroke-width="1.800"/><path d="M8 3c2-2.500 5-2.500 7.500 0.500l-1.500 1c-1.500-1.500-3-1.500-4.500 0z" fill="#9aa0aa"/><path d="M1.500 1.500c2-1 4 0 4 2.500l-1.500 1.500c-2 0.500-3.500-1.500-2.500-4z" fill="#b5bac4"/></svg><div class="t" style="left:1188px;top:538px;line-height:14px;height:14px;">工具箱</div>
<!-- props -->
<div class="twt" style="left:947px;top:559px;width:339px;height:19px;"></div><div class="t" style="left:949px;top:562px;line-height:14px;height:14px;color:#fff">属性</div><svg style="left:1242px;top:562px" width="41" height="12" viewBox="0 0 41 12"><path d="M0 3.500h8l-4 4z" fill="#fff"/><path d="M17.500 1v5.500M21.500 1v5.500M17.500 1.500h4M15.500 6.500h8M19.500 7v4.500" stroke="#fff" fill="none"/><path d="M20.500 1v5" stroke="#fff"/><path d="M30.500 2l9 8M39.500 2l-9 8" stroke="#fff" stroke-width="1.600"/></svg><div style="left:947px;top:578px;width:339px;height:25px;background:#dce2ec"></div><div style="left:947px;top:581px;width:339px;height:22px;background:#fff;border:1px solid #f4efe0"></div><div class="t" style="left:951px;top:585px;line-height:14px"><span class="lb">IDD_TABBOX (Dialog)</span><span class="l"> IDlgEditor</span></div><div style="left:1271px;top:582px;width:13px;height:18px;background:#ece9d8"><svg style="left:4px;top:8px" width="5" height="3" viewBox="0 0 5 3"><path d="M0 0h5l-2.500 3z" fill="#000"/></svg></div><div style="left:947px;top:603px;width:339px;height:27px;background:linear-gradient(to bottom,#c3cddd 0,#bcc7d8 50%,#b6c1d4 100%)"></div><div style="left:950px;top:606px;width:22px;height:22px;background:#ffe8a6;border:1px solid #e5c365"></div><svg style="left:953px;top:609px" width="16" height="16" viewBox="0 0 16 16" ><rect x="0.500" y="0.500" width="5" height="5" fill="#fff" stroke="#3a5a98"/><path d="M2 3h2M3 2v2" stroke="#000" stroke-width=".8"/><rect x="0.500" y="9.500" width="5" height="5" fill="#fff" stroke="#3a5a98"/><path d="M2 12h2M3 11v2" stroke="#000" stroke-width=".8"/><path d="M7 1.500h8M7 3.500h8M7 5.500h8M7 10.500h8M7 12.500h8M7 14.500h8" stroke="#555" stroke-dasharray="1 1"/></svg><svg style="left:976px;top:609px" width="16" height="16" viewBox="0 0 16 16" ><text x="0" y="7" font-family="Liberation Sans,sans-serif" font-weight="bold" font-size="8" fill="#2a4ad0">A</text><text x="0" y="15" font-family="Liberation Sans,sans-serif" font-weight="bold" font-size="8" fill="#c02020">Z</text><path d="M11.500 1v12M8.500 10l3 4 3-4" fill="none" stroke="#000" stroke-width="1.400"/></svg><div style="left:999px;top:607px;width:1px;height:18px;background:#8591a8"></div><div style="left:1000px;top:607px;width:1px;height:18px;background:#d5dceb"></div><div style="left:1002px;top:606px;width:22px;height:22px;background:#ffe8a6;border:1px solid #e5c365"></div><svg style="left:1005px;top:609px" width="16" height="16" viewBox="0 0 16 16" ><rect x="1.500" y="1.500" width="13" height="12" fill="#fff" stroke="#3a4a78"/><path d="M3.500 5h2M7 5h6M3.500 7.500h2M7 7.500h6M3.500 10h2M7 10h6" stroke="#3a4a78"/></svg><svg style="left:1029px;top:609px" width="16" height="16" viewBox="0 0 16 16" ><path d="M10 0l-7 8h4.500l-3.500 8 9-10h-4.500l4-6z" fill="#ffe000" stroke="#000" stroke-width="1"/></svg><svg style="left:1051px;top:609px" width="16" height="16" viewBox="0 0 16 16" ><rect x="1.500" y="2.500" width="13" height="9" fill="#fff" stroke="#000"/><rect x="1" y="2" width="14" height="3" fill="#1a2a98"/><path d="M4 8v6M7 7v8M10 8v6M12 5l2-3" stroke="#000" stroke-width="1.300"/></svg><div style="left:1074px;top:607px;width:1px;height:18px;background:#8591a8"></div><div style="left:1075px;top:607px;width:1px;height:18px;background:#d5dceb"></div><svg style="left:1080px;top:609px" width="16" height="16" viewBox="0 0 16 16" ><rect x="0.500" y="2.500" width="15" height="11" fill="#d5d9e2" stroke="#a3a9b8"/><rect x="0" y="2" width="16" height="3" fill="#b0b6c4"/><rect x="3.500" y="7.500" width="9" height="3" fill="#e8eaf0" stroke="#a3a9b8"/></svg><div style="left:947px;top:630px;width:323px;height:190px;background:#fff;overflow:hidden"><div style="left:0px;top:0px;width:323px;height:18px;background:#eeeeee"></div><div style="left:0px;top:17px;width:16px;height:180px;background:#eeeeee"></div><div style="left:3px;top:5px;width:9px;height:9px;border:1px solid #000;background:#fff"><div style="left:1px;top:3px;width:5px;height:1px;background:#000"></div></div><div class="t" style="left:18px;top:3px;line-height:14px;color:#8f9bae;font-weight:bold">杂项</div><div style="left:16px;top:34px;width:307px;height:1px;background:#eeeeee"></div><div class="t" style="left:17px;top:20px;line-height:14px;color:#aca899"><span class="l">(Name)</span></div><div class="t" style="left:168px;top:20px;line-height:14px;color:#aca899"><span class="l">IDD_TABBOX (Dialog)</span></div><div style="left:16px;top:51px;width:307px;height:1px;background:#eeeeee"></div><div class="t" style="left:17px;top:37px;line-height:14px;color:#000"><span class="l">Center Mouse</span></div><div class="t" style="left:168px;top:37px;line-height:14px;color:#000"><span class="l">False</span></div><div style="left:16px;top:68px;width:307px;height:1px;background:#eeeeee"></div><div class="t" style="left:17px;top:54px;line-height:14px;color:#aca899"><span class="l">Class Name</span></div><div class="t" style="left:168px;top:54px;line-height:14px;color:#aca899"></div><div style="left:16px;top:85px;width:307px;height:1px;background:#eeeeee"></div><div class="t" style="left:17px;top:71px;line-height:14px;color:#aca899"><span class="l">Context Help</span></div><div class="t" style="left:168px;top:71px;line-height:14px;color:#aca899"><span class="l">False</span></div><div style="left:16px;top:102px;width:307px;height:1px;background:#eeeeee"></div><div class="t" style="left:17px;top:88px;line-height:14px;color:#000"><span class="l">Control</span></div><div class="t" style="left:168px;top:88px;line-height:14px;color:#000"><span class="l">False</span></div><div style="left:16px;top:119px;width:307px;height:1px;background:#eeeeee"></div><div class="t" style="left:17px;top:105px;line-height:14px;color:#000"><span class="l">Control Parent</span></div><div class="t" style="left:168px;top:105px;line-height:14px;color:#000"><span class="l">False</span></div><div style="left:16px;top:136px;width:307px;height:1px;background:#eeeeee"></div><div class="t" style="left:17px;top:122px;line-height:14px;color:#000"><span class="l">ID</span></div><div class="t" style="left:168px;top:122px;line-height:14px;color:#000"><span class="l">IDD_TABBOX</span></div><div style="left:16px;top:153px;width:307px;height:1px;background:#eeeeee"></div><div class="t" style="left:17px;top:139px;line-height:14px;color:#000"><span class="l">Local Edit</span></div><div class="t" style="left:168px;top:139px;line-height:14px;color:#000"><span class="l">False</span></div><div style="left:16px;top:170px;width:307px;height:1px;background:#eeeeee"></div><div class="t" style="left:17px;top:156px;line-height:14px;color:#000"><span class="l">Menu</span></div><div class="t" style="left:168px;top:156px;line-height:14px;color:#000"></div><div style="left:16px;top:187px;width:307px;height:1px;background:#eeeeee"></div><div class="t" style="left:17px;top:173px;line-height:14px;color:#000"><span class="l">No Fail Create</span></div><div class="t" style="left:168px;top:173px;line-height:14px;color:#000"><span class="l">False</span></div><div style="left:16px;top:204px;width:307px;height:1px;background:#eeeeee"></div><div class="t" style="left:17px;top:190px;line-height:14px;color:#000"></div><div class="t" style="left:168px;top:190px;line-height:14px;color:#000"></div><div style="left:164px;top:17px;width:1px;height:180px;background:#eeeeee"></div></div><div style="left:1270px;top:630px;width:16px;height:190px;background:linear-gradient(to right,#f3f1ec 0,#fdfdfb 40%,#fefefb 100%)"></div><div style="left:1270px;top:631px;width:16px;height:16px;background:linear-gradient(135deg,#e1eafe 0,#c6d6fb 50%,#b5c9f6 100%);border:1px solid #fff;border-radius:3px;box-shadow:0 0 0 1px #b4c8f6 inset"><svg style="left:2px;top:2px" width="10" height="10" viewBox="0 0 10 10"><path d="M1.500 6l3.500-3.500 3.500 3.500" fill="none" stroke="#4d6185" stroke-width="2"/></svg></div><div style="left:1270px;top:803px;width:16px;height:16px;background:linear-gradient(135deg,#e1eafe 0,#c6d6fb 50%,#b5c9f6 100%);border:1px solid #fff;border-radius:3px;box-shadow:0 0 0 1px #b4c8f6 inset"><svg style="left:2px;top:2px" width="10" height="10" viewBox="0 0 10 10"><path d="M1.500 3l3.500 3.500 3.500-3.500" fill="none" stroke="#4d6185" stroke-width="2"/></svg></div><div style="left:1271px;top:758px;width:15px;height:29px;background:linear-gradient(to right,#c9d8fc 0,#bfd0fb 50%,#b0c4f5 100%);border:1px solid #fff;border-radius:2px;box-shadow:0 0 0 1px #98b4ee inset"><div style="left:4px;top:10px;width:6px;height:1px;background:#eef4fe"></div><div style="left:5px;top:11px;width:6px;height:1px;background:#8cb0f8"></div><div style="left:4px;top:12px;width:6px;height:1px;background:#eef4fe"></div><div style="left:5px;top:13px;width:6px;height:1px;background:#8cb0f8"></div><div style="left:4px;top:14px;width:6px;height:1px;background:#eef4fe"></div><div style="left:5px;top:15px;width:6px;height:1px;background:#8cb0f8"></div><div style="left:4px;top:16px;width:6px;height:1px;background:#eef4fe"></div><div style="left:5px;top:17px;width:6px;height:1px;background:#8cb0f8"></div></div><div style="left:947px;top:820px;width:339px;height:11px;background:#e2e5ee"></div><div style="left:947px;top:820px;width:339px;height:1px;background:#c4bea6"></div><div style="left:947px;top:825px;width:339px;height:1px;background:#b4ad90"></div><div style="left:947px;top:830px;width:339px;height:1px;background:#b4ad90"></div>
<!-- statusbar -->
<div class="t" style="left:8px;top:842px;line-height:14px;height:14px;color:#fff">就绪</div><svg style="left:951px;top:841px" width="16" height="16" viewBox="0 0 16 16"><path d="M4.500 0v6M1 3.500h7" stroke="#fff" fill="none"/><rect x="5.500" y="4.500" width="9" height="9" fill="none" stroke="#fff" stroke-dasharray="1 1"/></svg><div class="t" style="left:968px;top:842px;line-height:14px;height:14px;color:#fff"><span class="l">0 , 0</span></div><svg style="left:1111px;top:841px" width="16" height="16" viewBox="0 0 16 16"><rect x="3.500" y="2.500" width="10" height="9" fill="none" stroke="#fff" stroke-dasharray="1 1"/><path d="M1 14.500h8M5 10v4M9 1l3 3M12 1v3h-3" stroke="#fff" fill="none"/></svg><div class="t" style="left:1127px;top:842px;line-height:14px;height:14px;color:#fff"><span class="l">374 x 166</span></div><div style="left:1279px;top:854px;width:2px;height:2px;background:#b8a880"></div><div style="left:1280px;top:855px;width:2px;height:2px;background:#fff"></div><div style="left:1283px;top:854px;width:2px;height:2px;background:#b8a880"></div><div style="left:1284px;top:855px;width:2px;height:2px;background:#fff"></div><div style="left:1287px;top:854px;width:2px;height:2px;background:#b8a880"></div><div style="left:1288px;top:855px;width:2px;height:2px;background:#fff"></div><div style="left:1283px;top:850px;width:2px;height:2px;background:#b8a880"></div><div style="left:1284px;top:851px;width:2px;height:2px;background:#fff"></div><div style="left:1287px;top:850px;width:2px;height:2px;background:#b8a880"></div><div style="left:1288px;top:851px;width:2px;height:2px;background:#fff"></div><div style="left:1287px;top:846px;width:2px;height:2px;background:#b8a880"></div><div style="left:1288px;top:847px;width:2px;height:2px;background:#fff"></div><div class="t" style="left:1077px;top:827px;line-height:28px;font:22px/28px 'Liberation Sans','Noto Sans CJK SC',sans-serif;color:rgba(205,205,205,.82);text-shadow:0 0 1px rgba(110,110,110,.8)">CSDN @<span style="font-size:22.500px;letter-spacing:1.300px;position:relative;top:1.500px;left:-2px;display:inline-block;transform:scaleX(1.040);transform-origin:left">巨大八爪鱼</span></div>
</div>
</body></html>
